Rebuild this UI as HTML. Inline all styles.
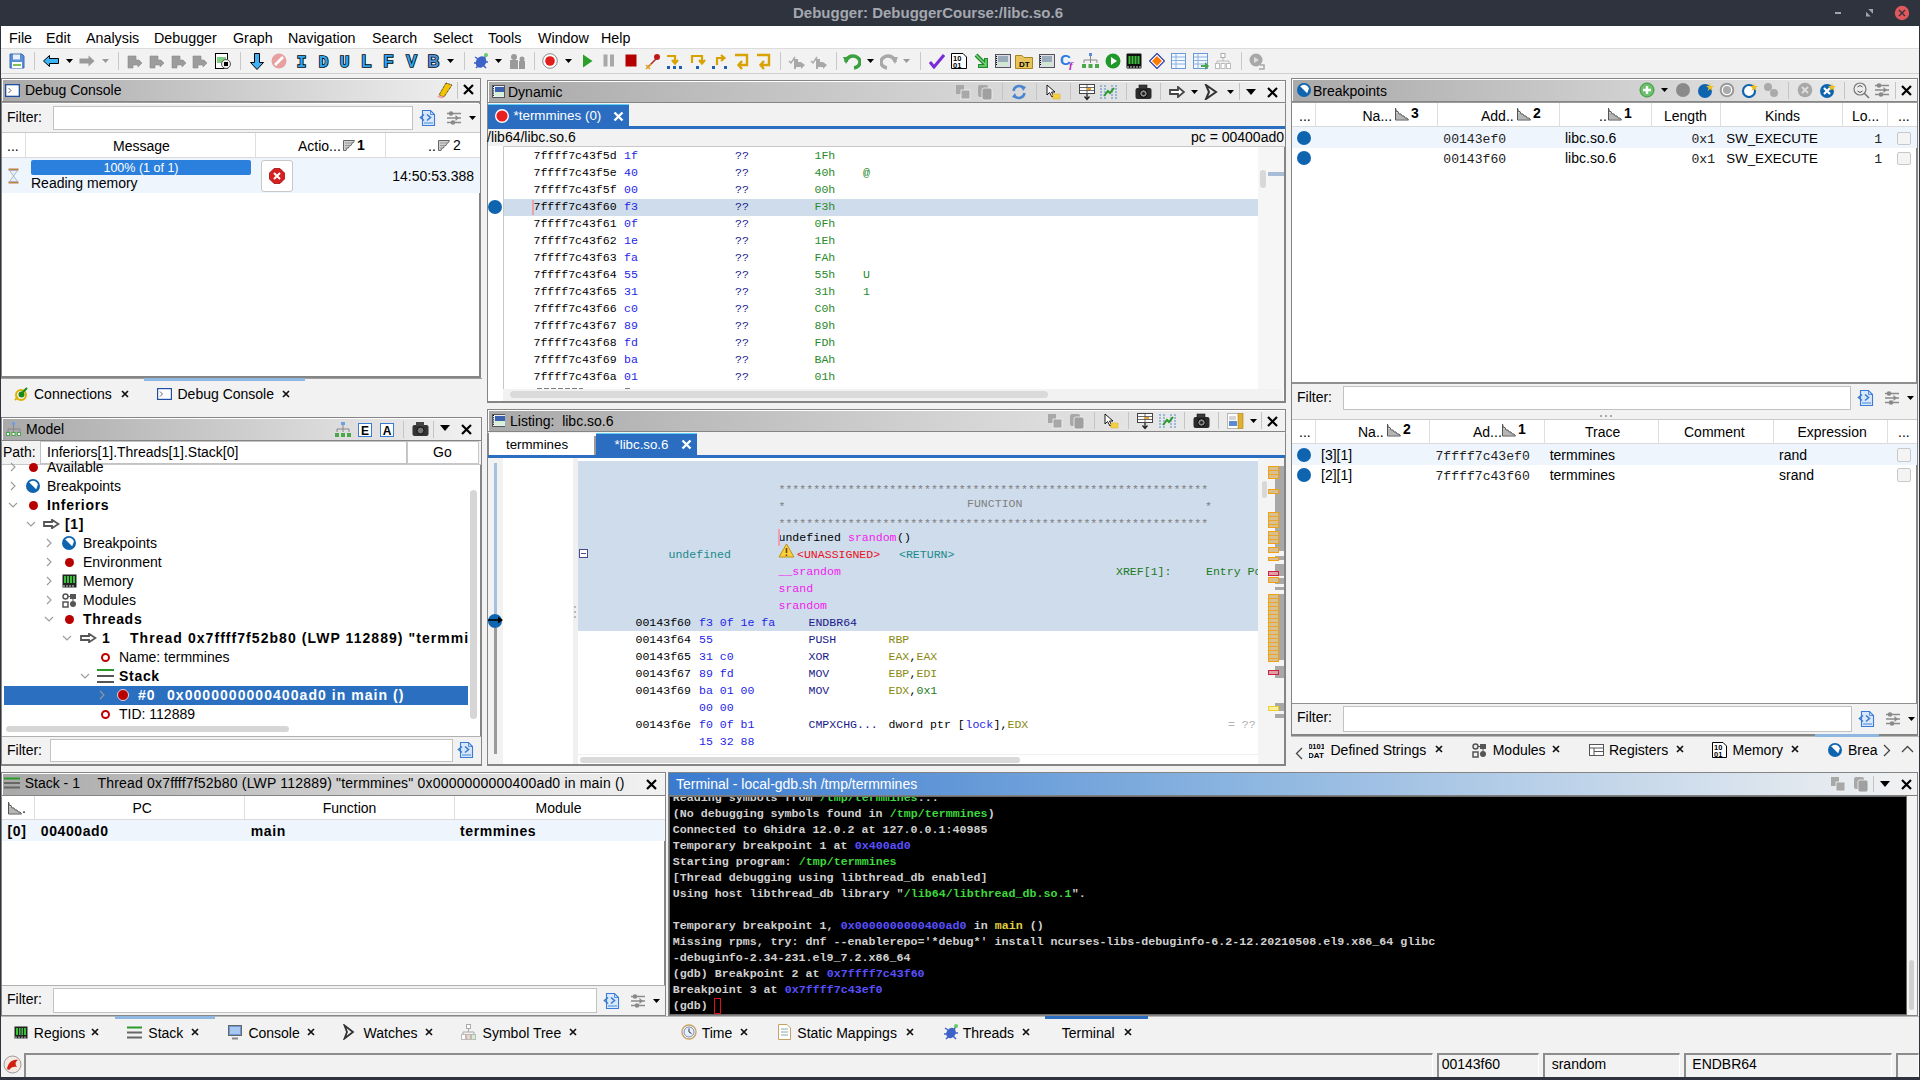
<!DOCTYPE html>
<html><head><meta charset="utf-8"><style>
*{box-sizing:border-box;margin:0;padding:0}
html,body{width:1920px;height:1080px;overflow:hidden;background:#f2f2f2;font-family:"Liberation Sans",sans-serif;font-size:13px;color:#000}
.a{position:absolute}
.t{position:absolute;white-space:pre}
</style></head><body>
<div class="a" style="left:0px;top:0px;width:1920px;height:26px;background:#2f333d"></div>
<div class="t" style="left:793px;top:3.30px;font-size:15px;line-height:19px;color:#a4a8b0;font-weight:bold;">Debugger: DebuggerCourse:/libc.so.6</div>
<div class="a" style="left:1835px;top:12px;width:6px;height:2px;background:#a0a4ac"></div>
<svg class="a" style="left:1866px;top:9px;" width="8" height="8" viewBox="0 0 8 8"><path d="M2.2 0 H7 V4.8 Z M0 2.7 V7.5 H4.8 Z" fill="#a0a4ac"/></svg>
<svg class="a" style="left:1894px;top:5px;" width="16" height="16" viewBox="0 0 16 16"><circle cx="8" cy="8" r="7.2" fill="#e0575c"/><path d="M5 5 L11 11 M11 5 L5 11" stroke="#2f333d" stroke-width="1.3"/></svg>
<div class="a" style="left:0px;top:26px;width:1px;height:1054px;background:#2f333d"></div>
<div class="a" style="left:1919px;top:26px;width:1px;height:1054px;background:#2f333d"></div>
<div class="a" style="left:0px;top:1077px;width:1920px;height:3px;background:#2f333d"></div>
<div class="a" style="left:1px;top:26px;width:1918px;height:23px;background:#fff"></div>
<div class="a" style="left:1px;top:48px;width:1918px;height:1px;background:#dcdcdc"></div>
<div class="t" style="left:9px;top:28.55px;font-size:14.3px;line-height:18px;">File</div>
<div class="t" style="left:46px;top:28.55px;font-size:14.3px;line-height:18px;">Edit</div>
<div class="t" style="left:86px;top:28.55px;font-size:14.3px;line-height:18px;">Analysis</div>
<div class="t" style="left:154px;top:28.55px;font-size:14.3px;line-height:18px;">Debugger</div>
<div class="t" style="left:233px;top:28.55px;font-size:14.3px;line-height:18px;">Graph</div>
<div class="t" style="left:288px;top:28.55px;font-size:14.3px;line-height:18px;">Navigation</div>
<div class="t" style="left:372px;top:28.55px;font-size:14.3px;line-height:18px;">Search</div>
<div class="t" style="left:433px;top:28.55px;font-size:14.3px;line-height:18px;">Select</div>
<div class="t" style="left:488px;top:28.55px;font-size:14.3px;line-height:18px;">Tools</div>
<div class="t" style="left:538px;top:28.55px;font-size:14.3px;line-height:18px;">Window</div>
<div class="t" style="left:601px;top:28.55px;font-size:14.3px;line-height:18px;">Help</div>
<div class="a" style="left:1px;top:49px;width:1918px;height:24px;background:#f2f2f2"></div>
<div class="a" style="left:1px;top:73px;width:1918px;height:1px;background:#d0d0d0"></div>
<svg class="a" style="left:9px;top:53px;" width="16" height="16" viewBox="0 0 16 16"><path d="M1 1 H13 L15 3 V15 H1 Z" fill="#5b8fd6" stroke="#3a6db8"/><rect x="4" y="1.5" width="7" height="5" fill="#e8f0fb"/><rect x="3" y="9" width="10" height="6" fill="#fff"/><rect x="4" y="11" width="8" height="2" fill="#7cc35a"/></svg>
<div class="a" style="left:34px;top:52px;width:1px;height:18px;background:#c8c8c8"></div>
<svg class="a" style="left:43px;top:55px;" width="16" height="12" viewBox="0 0 16 12"><path d="M0.5 6 L6.5 0.5 V3.5 H15.5 V8.5 H6.5 V11.5 Z" fill="#3fb1f5" stroke="#000" stroke-width="1"/></svg>
<svg class="a" style="left:66px;top:59px;" width="7" height="4" viewBox="0 0 7 4"><path d="M0 0 H7 L3.5 4 Z" fill="#000"/></svg>
<svg class="a" style="left:79px;top:55px;" width="16" height="12" viewBox="0 0 16 12"><path d="M15.5 6 L9.5 0.5 V3.5 H0.5 V8.5 H9.5 V11.5 Z" fill="#9a9a9a"/></svg>
<svg class="a" style="left:102px;top:59px;" width="7" height="4" viewBox="0 0 7 4"><path d="M0 0 H7 L3.5 4 Z" fill="#9a9a9a"/></svg>
<div class="a" style="left:118px;top:52px;width:1px;height:18px;background:#c8c8c8"></div>
<svg class="a" style="left:127px;top:53px;" width="16" height="16" viewBox="0 0 16 16"><path d="M1 3 H9 V7 H12 L15 10 L11 14 V12 H6 V15 H1 Z" fill="#9c9c9c" stroke="#8a8a8a" stroke-width="0.6"/></svg>
<svg class="a" style="left:149px;top:53px;" width="16" height="16" viewBox="0 0 16 16"><path d="M1 3 H9 V7 H12 L15 10 L11 14 V12 H6 V15 H1 Z" fill="#9c9c9c" stroke="#8a8a8a" stroke-width="0.6"/></svg>
<svg class="a" style="left:171px;top:53px;" width="16" height="16" viewBox="0 0 16 16"><path d="M1 3 H9 V7 H12 L15 10 L11 14 V12 H6 V15 H1 Z" fill="#9c9c9c" stroke="#8a8a8a" stroke-width="0.6"/></svg>
<svg class="a" style="left:192px;top:53px;" width="16" height="16" viewBox="0 0 16 16"><path d="M1 3 H9 V7 H12 L15 10 L11 14 V12 H6 V15 H1 Z" fill="#9c9c9c" stroke="#8a8a8a" stroke-width="0.6"/></svg>
<svg class="a" style="left:215px;top:53px;" width="16" height="16" viewBox="0 0 16 16"><rect x="0.5" y="0.5" width="12" height="15" fill="#fff" stroke="#000"/><rect x="2" y="4" width="9" height="6" fill="#7ed07e"/><circle cx="11" cy="11" r="4.5" fill="#eee" stroke="#555"/><rect x="9" y="9" width="4" height="4" fill="#000"/></svg>
<div class="a" style="left:240px;top:52px;width:1px;height:18px;background:#c8c8c8"></div>
<svg class="a" style="left:250px;top:53px;" width="14" height="17" viewBox="0 0 14 17"><path d="M4.5 0.5 H9.5 V9.5 H13.5 L7 16.5 L0.5 9.5 H4.5 Z" fill="#3fb1f5" stroke="#000"/></svg>
<svg class="a" style="left:271px;top:53px;" width="16" height="16" viewBox="0 0 16 16"><circle cx="8" cy="8" r="7.5" fill="#e6a0a0"/><path d="M4 12 L12 4" stroke="#fff" stroke-width="2.6"/></svg>
<svg class="a" style="left:293px;top:52px;" width="17" height="18" viewBox="0 0 17 18"><text x="8.5" y="15" text-anchor="middle" font-family="Liberation Mono" font-weight="bold" font-size="16" fill="#2fa5ee" stroke="#000" stroke-width="1.6" paint-order="stroke">I</text></svg>
<svg class="a" style="left:315px;top:52px;" width="17" height="18" viewBox="0 0 17 18"><text x="8.5" y="15" text-anchor="middle" font-family="Liberation Mono" font-weight="bold" font-size="16" fill="#2fa5ee" stroke="#000" stroke-width="1.6" paint-order="stroke">D</text></svg>
<svg class="a" style="left:336px;top:52px;" width="17" height="18" viewBox="0 0 17 18"><text x="8.5" y="15" text-anchor="middle" font-family="Liberation Mono" font-weight="bold" font-size="16" fill="#2fa5ee" stroke="#000" stroke-width="1.6" paint-order="stroke">U</text></svg>
<svg class="a" style="left:358px;top:52px;" width="17" height="18" viewBox="0 0 17 18"><text x="8.5" y="15" text-anchor="middle" font-family="Liberation Sans" font-weight="bold" font-size="16" fill="#2fa5ee" stroke="#000" stroke-width="1.6" paint-order="stroke">L</text></svg>
<svg class="a" style="left:380px;top:52px;" width="17" height="18" viewBox="0 0 17 18"><text x="8.5" y="15" text-anchor="middle" font-family="Liberation Sans" font-weight="bold" font-size="16" fill="#2fa5ee" stroke="#000" stroke-width="1.6" paint-order="stroke">F</text></svg>
<svg class="a" style="left:403px;top:52px;" width="17" height="18" viewBox="0 0 17 18"><text x="8.5" y="15" text-anchor="middle" font-family="Liberation Sans" font-weight="bold" font-size="16" fill="#2fa5ee" stroke="#000" stroke-width="1.6" paint-order="stroke">V</text></svg>
<svg class="a" style="left:425px;top:52px;" width="17" height="18" viewBox="0 0 17 18"><text x="8.5" y="15" text-anchor="middle" font-family="Liberation Sans" font-weight="bold" font-size="16" fill="#4f93db" stroke="#000" stroke-width="1.6" paint-order="stroke">B</text></svg>
<svg class="a" style="left:447px;top:59px;" width="7" height="4" viewBox="0 0 7 4"><path d="M0 0 H7 L3.5 4 Z" fill="#000"/></svg>
<div class="a" style="left:464px;top:52px;width:1px;height:18px;background:#c8c8c8"></div>
<svg class="a" style="left:473px;top:53px;" width="17" height="16" viewBox="0 0 17 16"><ellipse cx="8" cy="9" rx="5" ry="6" fill="#3d63c9" transform="rotate(35 8 9)"/><path d="M2 4 L5 6 M1 10 H4 M3 15 L6 12 M14 2 L11 5 M15 9 H12 M13 15 L10 12" stroke="#3d63c9" stroke-width="1.5"/><circle cx="13" cy="2" r="2" fill="#6c6"/></svg>
<svg class="a" style="left:495px;top:59px;" width="7" height="4" viewBox="0 0 7 4"><path d="M0 0 H7 L3.5 4 Z" fill="#000"/></svg>
<svg class="a" style="left:509px;top:53px;" width="17" height="17" viewBox="0 0 17 17"><circle cx="5" cy="4" r="3" fill="#9a9a9a"/><rect x="1" y="7" width="8" height="9" fill="#9a9a9a"/><rect x="10" y="8" width="6" height="8" fill="#9a9a9a"/><circle cx="13" cy="6" r="2.5" fill="#9a9a9a"/></svg>
<div class="a" style="left:534px;top:52px;width:1px;height:18px;background:#c8c8c8"></div>
<svg class="a" style="left:542px;top:53px;" width="16" height="16" viewBox="0 0 16 16"><circle cx="8" cy="8" r="7.3" fill="#fff" stroke="#8a8a8a"/><circle cx="8" cy="8" r="4.8" fill="#e21b1b"/></svg>
<svg class="a" style="left:565px;top:59px;" width="7" height="4" viewBox="0 0 7 4"><path d="M0 0 H7 L3.5 4 Z" fill="#000"/></svg>
<svg class="a" style="left:582px;top:54px;" width="11" height="14" viewBox="0 0 11 14"><path d="M1 0.5 L10.5 7 L1 13.5 Z" fill="#2aa02a"/></svg>
<svg class="a" style="left:603px;top:54px;" width="12" height="13" viewBox="0 0 12 13"><rect x="0.5" y="0.5" width="4" height="12" fill="#a8a8a8"/><rect x="7" y="0.5" width="4" height="12" fill="#a8a8a8"/></svg>
<svg class="a" style="left:625px;top:54px;" width="12" height="13" viewBox="0 0 12 13"><rect x="0.5" y="0.5" width="11" height="12" fill="#b40000"/></svg>
<svg class="a" style="left:645px;top:53px;" width="17" height="17" viewBox="0 0 17 17"><circle cx="12" cy="4" r="3" fill="#c01818"/><path d="M3 14 L12 5" stroke="#b02020" stroke-width="1.5"/><path d="M1 12 L5 16 M1 16 L6 11" stroke="#e0a020" stroke-width="1.6"/></svg>
<svg class="a" style="left:666px;top:53px;" width="17" height="17" viewBox="0 0 17 17"><path d="M1 3 H9 V10 M6 7 L9 10.5 L12 7" stroke="#d8a200" stroke-width="2.2" fill="none"/><rect x="1" y="13" width="3" height="3" fill="#1f5fb0"/><rect x="7" y="13" width="3" height="3" fill="#1f5fb0"/><rect x="13" y="13" width="3" height="3" fill="#1f5fb0"/></svg>
<svg class="a" style="left:689px;top:53px;" width="17" height="17" viewBox="0 0 17 17"><path d="M3 10 V3 H13 V10 M10 7 L13 10.5 L16 7" stroke="#d8a200" stroke-width="2.2" fill="none"/><rect x="7" y="13" width="3" height="3" fill="#1f5fb0"/></svg>
<svg class="a" style="left:711px;top:53px;" width="17" height="17" viewBox="0 0 17 17"><path d="M6 12 V5 H13 M10 2 L13.5 5 L10 8" stroke="#d8a200" stroke-width="2.2" fill="none"/><rect x="1" y="13" width="3" height="3" fill="#1f5fb0"/><rect x="13" y="13" width="3" height="3" fill="#1f5fb0"/></svg>
<svg class="a" style="left:733px;top:53px;" width="17" height="17" viewBox="0 0 17 17"><path d="M2 2 H14 V12 H6 M9 8 L5.5 12 L9 16" stroke="#d8a200" stroke-width="2.4" fill="none"/></svg>
<svg class="a" style="left:755px;top:53px;" width="17" height="17" viewBox="0 0 17 17"><path d="M2 2 H14 V12 H6 M9 8 L5.5 12 L9 16" stroke="#d8a200" stroke-width="2.4" fill="none"/></svg>
<div class="a" style="left:780px;top:52px;width:1px;height:18px;background:#c8c8c8"></div>
<svg class="a" style="left:788px;top:53px;" width="18" height="17" viewBox="0 0 18 17"><path d="M2 4 L5 1 M6 6 H10 V9 H13 L17 12 L13 16 V14 H8 V16 H6 Z" fill="#a8a8a8"/><path d="M1 8 L3 10 L7 4" stroke="#a8a8a8" stroke-width="1.4" fill="none"/></svg>
<svg class="a" style="left:810px;top:53px;" width="18" height="17" viewBox="0 0 18 17"><path d="M2 4 L5 1 M6 6 H10 V9 H13 L17 12 L13 16 V14 H8 V16 H6 Z" fill="#a8a8a8"/><path d="M1 8 L3 10 L7 4" stroke="#a8a8a8" stroke-width="1.4" fill="none"/></svg>
<div class="a" style="left:836px;top:52px;width:1px;height:18px;background:#c8c8c8"></div>
<svg class="a" style="left:843px;top:53px;" width="18" height="17" viewBox="0 0 18 17"><path d="M3 9 A7 6 0 1 1 11 15" stroke="#3aa040" stroke-width="3.5" fill="none"/><path d="M0 4 L7 4 L3 11 Z" fill="#3aa040"/></svg>
<svg class="a" style="left:867px;top:59px;" width="7" height="4" viewBox="0 0 7 4"><path d="M0 0 H7 L3.5 4 Z" fill="#000"/></svg>
<svg class="a" style="left:880px;top:53px;" width="18" height="17" viewBox="0 0 18 17"><path d="M15 9 A7 6 0 1 0 7 15" stroke="#a8a8a8" stroke-width="3.5" fill="none"/><path d="M18 4 L11 4 L15 11 Z" fill="#a8a8a8"/></svg>
<svg class="a" style="left:903px;top:59px;" width="7" height="4" viewBox="0 0 7 4"><path d="M0 0 H7 L3.5 4 Z" fill="#9a9a9a"/></svg>
<div class="a" style="left:920px;top:52px;width:1px;height:18px;background:#c8c8c8"></div>
<svg class="a" style="left:929px;top:53px;" width="16" height="16" viewBox="0 0 16 16"><path d="M1 9 L5 14 L15 2" stroke="#7a2ad6" stroke-width="3" fill="none"/></svg>
<svg class="a" style="left:951px;top:53px;" width="16" height="16" viewBox="0 0 16 16"><path d="M0.5 0.5 H12 L15.5 4 V15.5 H0.5 Z" fill="#fff" stroke="#000"/><text x="2" y="7.5" font-family="Liberation Sans" font-weight="bold" font-size="7.5">10</text><text x="2" y="14.5" font-family="Liberation Sans" font-weight="bold" font-size="7.5">01</text></svg>
<svg class="a" style="left:973px;top:53px;" width="16" height="16" viewBox="0 0 16 16"><path d="M3 2 L13 12 M13 5 V13 H5" stroke="#1e8a2a" stroke-width="4" fill="none"/><path d="M3 2 L13 12 M13 6 V13 H6" stroke="#7cd47c" stroke-width="1.5" fill="none"/></svg>
<svg class="a" style="left:995px;top:54px;" width="16" height="14" viewBox="0 0 16 14"><rect x="0.5" y="0.5" width="15" height="13" fill="#dde" stroke="#555"/><rect x="3" y="2" width="10" height="10" fill="#9ab"/><rect x="3" y="8" width="10" height="4" fill="#cfe8cf"/><path d="M1.5 2 V12" stroke="#000" stroke-dasharray="1 1"/></svg>
<svg class="a" style="left:1015px;top:53px;" width="18" height="16" viewBox="0 0 18 16"><path d="M0.5 2.5 H7 L9 4.5 H17.5 V15.5 H0.5 Z" fill="#e9c45a" stroke="#a98420"/><text x="4" y="13.5" font-family="Liberation Sans" font-weight="bold" font-size="8">DT</text></svg>
<svg class="a" style="left:1039px;top:54px;" width="16" height="14" viewBox="0 0 16 14"><rect x="0.5" y="0.5" width="15" height="13" fill="#dde" stroke="#555"/><rect x="3" y="2" width="10" height="10" fill="#9ab"/><rect x="3" y="8" width="10" height="4" fill="#cfe8cf"/><path d="M1.5 2 V12" stroke="#000" stroke-dasharray="1 1"/></svg>
<svg class="a" style="left:1060px;top:52px;" width="18" height="18" viewBox="0 0 18 18"><text x="0" y="13" font-family="Liberation Sans" font-weight="bold" font-size="15" fill="#2a7ae8">C</text><text x="9" y="17" font-family="Liberation Serif" font-style="italic" font-weight="bold" font-size="11" fill="#c020c0">f</text></svg>
<svg class="a" style="left:1082px;top:53px;" width="17" height="16" viewBox="0 0 17 16"><rect x="7" y="0" width="3" height="3" fill="#5a8ad8"/><path d="M8.5 3 V7 M2 10 V7 H15 V10 M8.5 7 V10" stroke="#888" fill="none"/><rect x="0" y="11" width="4" height="4" fill="#4aa84a"/><rect x="6.5" y="11" width="4" height="4" fill="#4aa84a"/><rect x="13" y="11" width="4" height="4" fill="#4aa84a"/></svg>
<svg class="a" style="left:1105px;top:53px;" width="16" height="16" viewBox="0 0 16 16"><circle cx="8" cy="8" r="7.5" fill="#1f9a2a"/><path d="M6 4 L12 8 L6 12 Z" fill="#fff"/></svg>
<svg class="a" style="left:1126px;top:53px;" width="16" height="16" viewBox="0 0 16 16"><rect x="0.5" y="0.5" width="15" height="15" fill="#111" rx="1"/><rect x="2.5" y="3" width="11" height="8" fill="#3cbf3c"/><path d="M5 3 V11 M8 3 V11 M11 3 V11" stroke="#111"/><path d="M2 13 V15 M5 13 V15 M8 13 V15 M11 13 V15 M14 13 V15" stroke="#ddd"/></svg>
<svg class="a" style="left:1149px;top:53px;" width="16" height="16" viewBox="0 0 16 16"><path d="M8 0.5 L15.5 8 L8 15.5 L0.5 8 Z" fill="#fff" stroke="#2a3aa8" stroke-width="1.2"/><path d="M8 3 L13 8 L8 13 L3 8 Z" fill="#ff7a00"/></svg>
<svg class="a" style="left:1171px;top:53px;" width="17" height="17" viewBox="0 0 17 17"><rect x="0.5" y="0.5" width="14" height="15" fill="#f4f8ff" stroke="#6a9ad8"/><path d="M1 4 H14 M1 7.5 H14 M1 11 H14 M5 1 V15" stroke="#8ab0e0"/></svg>
<svg class="a" style="left:1193px;top:53px;" width="17" height="17" viewBox="0 0 17 17"><rect x="0.5" y="0.5" width="14" height="15" fill="#f4f8ff" stroke="#6a9ad8"/><path d="M1 4 H14 M1 7.5 H14 M1 11 H14 M5 1 V15" stroke="#8ab0e0"/><path d="M8 12 H12 V9 L16 13 L12 17 V14 H8 Z" fill="#4aa84a"/></svg>
<svg class="a" style="left:1215px;top:53px;" width="16" height="16" viewBox="0 0 16 16"><rect x="6" y="0.5" width="4" height="4" fill="#fff" stroke="#aaa"/><path d="M8 5 V8 M2 10 V8 H14 V10" stroke="#bbb" fill="none"/><rect x="0.5" y="10.5" width="4" height="5" fill="#fff" stroke="#bbb"/><rect x="6" y="10.5" width="4" height="5" fill="#fff" stroke="#bbb"/><rect x="11.5" y="10.5" width="4" height="5" fill="#fff" stroke="#bbb"/></svg>
<div class="a" style="left:1241px;top:52px;width:1px;height:18px;background:#c8c8c8"></div>
<svg class="a" style="left:1249px;top:53px;" width="17" height="17" viewBox="0 0 17 17"><circle cx="7" cy="7" r="6.5" fill="#a8a8a8"/><path d="M5 4 L10 7 L5 10 Z" fill="#ddd"/><path d="M11 12 H15 V16 H10" stroke="#a8a8a8" stroke-width="1.5" fill="none"/></svg>
<div class="a" style="left:1px;top:78px;width:480px;height:300px;background:#fff;border:1px solid #858585;border-right:2px solid #858585;border-bottom:2px solid #858585"></div>
<div class="a" style="left:2px;top:79px;width:478px;height:23px;background:linear-gradient(to right,#a9a9a9,#f2f2f2);border-top:1px solid #fff;border-left:1px solid #fff"></div>
<div class="a" style="left:2px;top:101px;width:478px;height:1px;background:#858585"></div>
<div class="a" style="left:1px;top:102px;width:480px;height:1px;background:#9a9a9a"></div>
<svg class="a" style="left:5px;top:84px;" width="15" height="13" viewBox="0 0 15 13"><rect x="0.5" y="0.5" width="14" height="12" fill="#fff" stroke="#1f4fa0" stroke-width="1.6"/><path d="M3.5 4 L6 6.5 L3.5 9" stroke="#666" fill="none"/></svg>
<div class="t" style="left:25px;top:81.15px;font-size:14px;line-height:18px;">Debug Console</div>
<svg class="a" style="left:436px;top:82px;" width="17" height="17" viewBox="0 0 17 17"><path d="M10 1 L16 3 L8 15 L3 13 Z" fill="#f4c400" stroke="#000" stroke-width="0.8" stroke-dasharray="1 0.7"/><path d="M3 13 L8 15 L6 16.5 L1 15 Z" fill="#f0a0a8"/></svg>
<div class="a" style="left:457px;top:82px;width:1px;height:17px;background:#c4c4c4"></div>
<svg class="a" style="left:463.0px;top:84.0px;" width="11" height="11" viewBox="0 0 11 11"><path d="M1 1 L10 10 M10 1 L1 10" stroke="#000" stroke-width="2.2"/></svg>
<div class="a" style="left:1px;top:102px;width:480px;height:1px;background:#9a9a9a"></div>
<div class="a" style="left:2px;top:104px;width:478px;height:28px;background:#f2f2f2"></div>
<div class="t" style="left:7px;top:108.15px;font-size:14px;line-height:18px;">Filter:</div>
<div class="a" style="left:53px;top:106px;width:360px;height:24px;background:#fff;border:1px solid #c2c2c2"></div>
<svg class="a" style="left:419px;top:109.0px;" width="18" height="18" viewBox="0 0 18 18"><path d="M3.5 1.5 H11.5 L15.5 5.5 V16.5 H3.5 Z" fill="#d8e8fa" stroke="#3a7ad8" stroke-width="1.1"/><path d="M11.5 1.5 V5.5 H15.5" fill="none" stroke="#3a7ad8" stroke-width="0.8"/><path d="M5 5.5 L1.5 8.5 L5 11.5 M8 5.5 L11.5 8.5 L8 11.5" fill="none" stroke="#3a7ad0" stroke-width="1.6"/><path d="M5 14 H14" stroke="#5a9ae0" stroke-width="1.2"/></svg>
<svg class="a" style="left:446px;top:110.0px;" width="16" height="16" viewBox="0 0 16 16"><path d="M1 3.5 H15 M1 8 H15 M1 12.5 H15" stroke="#8a8a8a" stroke-width="1.6"/><circle cx="5" cy="3.5" r="2.3" fill="#8a8a8a"/><path d="M9.5 5 L13 8 L9.5 11 Z" fill="#8a8a8a"/><circle cx="7" cy="12.5" r="2.3" fill="#8a8a8a"/></svg>
<svg class="a" style="left:469px;top:116.0px;" width="7" height="4" viewBox="0 0 7 4"><path d="M0 0 H7 L3.5 4 Z" fill="#000"/></svg>
<div class="a" style="left:2px;top:132px;width:478px;height:1px;background:#c8c8c8"></div>
<div class="a" style="left:2px;top:133px;width:478px;height:25px;background:#fff;border-bottom:1px solid #dadada"></div>
<div class="a" style="left:25px;top:133px;width:1px;height:25px;background:#dedede"></div>
<div class="a" style="left:255px;top:133px;width:1px;height:25px;background:#dedede"></div>
<div class="a" style="left:385px;top:133px;width:1px;height:25px;background:#dedede"></div>
<div class="t" style="left:7px;top:137.15px;font-size:14px;line-height:18px;">...</div>
<div class="t" style="left:113px;top:137.15px;font-size:14px;line-height:18px;">Message</div>
<div class="t" style="left:298px;top:137.15px;font-size:14px;line-height:18px;">Actio...</div>
<svg class="a" style="left:342px;top:139px;" width="14" height="13" viewBox="0 0 14 13"><path d="M1.5 1.5 H12.5 L11 4 H10 L9 6.5 H7.5 L6.5 9 H5 L4 11.5 H1.5 Z" fill="#d0d0d0" stroke="#666" stroke-width="1"/><path d="M3 4 H10 M3 6.5 H8 M3 9 H6" stroke="#999"/></svg>
<div class="t" style="left:357px;top:136.15px;font-size:14px;line-height:18px;font-weight:bold;">1</div>
<div class="t" style="left:428px;top:137.15px;font-size:14px;line-height:18px;">..</div>
<svg class="a" style="left:437px;top:139px;" width="14" height="13" viewBox="0 0 14 13"><path d="M1.5 1.5 H12.5 L11 4 H10 L9 6.5 H7.5 L6.5 9 H5 L4 11.5 H1.5 Z" fill="#d0d0d0" stroke="#666" stroke-width="1"/><path d="M3 4 H10 M3 6.5 H8 M3 9 H6" stroke="#999"/></svg>
<div class="t" style="left:453px;top:136.15px;font-size:14px;line-height:18px;">2</div>
<div class="a" style="left:2px;top:158px;width:478px;height:35px;background:#eef5fd"></div>
<svg class="a" style="left:7px;top:168px;" width="13" height="16" viewBox="0 0 13 16"><path d="M1.5 1.5 H11.5 M1.5 14.5 H11.5" stroke="#c08040" stroke-width="2.2"/><path d="M2.5 2.5 L6.5 8 L2.5 13.5 H10.5 L6.5 8 L10.5 2.5 Z" fill="#e8f0fa" stroke="#9ab" stroke-width="0.8"/></svg>
<div class="a" style="left:31px;top:160px;width:220px;height:15px;background:#2a80dc;border-radius:2px"></div>
<div class="t" style="left:31.0px;width:220px;text-align:center;top:159.67px;font-size:12.5px;line-height:16px;color:#fff;">100% (1 of 1)</div>
<div class="t" style="left:31px;top:174.15px;font-size:14px;line-height:18px;">Reading memory</div>
<div class="a" style="left:261px;top:160px;width:32px;height:32px;background:#fff;border:1px solid #c8c8c8;border-radius:3px"></div>
<svg class="a" style="left:269px;top:168px;" width="16" height="16" viewBox="0 0 16 16"><path d="M5 0.5 H11 L15.5 5 V11 L11 15.5 H5 L0.5 11 V5 Z" fill="#d42020" stroke="#a01010" stroke-width="0.8"/><path d="M5 5 L11 11 M11 5 L5 11" stroke="#fff" stroke-width="2"/></svg>
<div class="t" style="left:354px;width:120px;text-align:right;top:167.15px;font-size:14px;line-height:18px;">14:50:53.388</div>
<div class="a" style="left:1px;top:378px;width:481px;height:1px;background:#a0a0a0"></div>
<div class="a" style="left:144px;top:378px;width:161px;height:3px;background:#8fb8e0"></div>
<svg class="a" style="left:14px;top:387px;" width="14" height="14" viewBox="0 0 14 14"><circle cx="7" cy="8" r="5" fill="none" stroke="#e0b000" stroke-width="2"/><circle cx="7.5" cy="7.5" r="3" fill="#1a8a1a"/><path d="M8 6 L13 1" stroke="#1a8a1a" stroke-width="2"/><path d="M1 13 L4 10" stroke="#e0b000" stroke-width="2"/></svg>
<div class="t" style="left:34px;top:385.15px;font-size:14px;line-height:18px;">Connections</div>
<svg class="a" style="left:120.5px;top:389.5px;" width="8" height="8" viewBox="0 0 8 8"><path d="M1 1 L7 7 M7 1 L1 7" stroke="#111" stroke-width="1.7"/></svg>
<svg class="a" style="left:157px;top:388px;" width="15" height="12" viewBox="0 0 15 12"><rect x="0.5" y="0.5" width="14" height="11" fill="#fff" stroke="#1f4fa0" stroke-width="1.4"/><path d="M3 3.5 L5.5 6 L3 8.5" stroke="#666" fill="none"/></svg>
<div class="t" style="left:177.5px;top:385.15px;font-size:14px;line-height:18px;">Debug Console</div>
<svg class="a" style="left:281.5px;top:389.5px;" width="8" height="8" viewBox="0 0 8 8"><path d="M1 1 L7 7 M7 1 L1 7" stroke="#111" stroke-width="1.7"/></svg>
<div class="a" style="left:1px;top:417px;width:481px;height:349px;background:#fff;border:1px solid #858585;border-right:2px solid #858585;border-bottom:2px solid #858585"></div>
<div class="a" style="left:2px;top:418px;width:479px;height:23px;background:linear-gradient(to right,#a9a9a9,#f2f2f2);border-top:1px solid #fff;border-left:1px solid #fff"></div>
<div class="a" style="left:2px;top:440px;width:479px;height:1px;background:#858585"></div>
<div class="a" style="left:1px;top:441px;width:481px;height:1px;background:#9a9a9a"></div>
<svg class="a" style="left:6px;top:422px;" width="16" height="16" viewBox="0 0 16 16"><rect x="6" y="0" width="3" height="3" fill="#6aa0e8"/><path d="M7.5 3 V7 M2 10 V7 H14 V10 M7.5 7 V10" stroke="#888" fill="none"/><rect x="0.5" y="10.5" width="3" height="3" fill="#fff" stroke="#4aa84a"/><rect x="6" y="10.5" width="3" height="3" fill="#fff" stroke="#4aa84a"/><rect x="11.5" y="10.5" width="3" height="3" fill="#fff" stroke="#4aa84a"/></svg>
<div class="t" style="left:26px;top:420.15px;font-size:14px;line-height:18px;">Model</div>
<svg class="a" style="left:335px;top:422px;" width="16" height="16" viewBox="0 0 16 16"><rect x="6" y="0" width="4" height="3" fill="#6aa0e8"/><path d="M8 3 V7 M2 10 V7 H14 V10 M8 7 V10" stroke="#888" fill="none"/><rect x="0" y="11" width="4" height="4" fill="#4aa84a"/><rect x="6" y="11" width="4" height="4" fill="#4aa84a"/><rect x="12" y="11" width="4" height="4" fill="#4aa84a"/></svg>
<svg class="a" style="left:358px;top:423px;" width="14" height="14" viewBox="0 0 14 14"><rect x="0.5" y="0.5" width="13" height="13" fill="#fff" stroke="#3a7ad0"/><text x="7" y="11.5" text-anchor="middle" font-family="Liberation Sans" font-weight="bold" font-size="12">E</text></svg>
<svg class="a" style="left:380px;top:423px;" width="14" height="14" viewBox="0 0 14 14"><rect x="0.5" y="0.5" width="13" height="13" fill="#fff" stroke="#3a7ad0"/><text x="7" y="11.5" text-anchor="middle" font-family="Liberation Sans" font-weight="bold" font-size="12">A</text></svg>
<div class="a" style="left:403px;top:421px;width:1px;height:17px;background:#c4c4c4"></div>
<svg class="a" style="left:412px;top:421px;" width="17" height="16" viewBox="0 0 17 16"><rect x="0.5" y="4" width="16" height="11" rx="2" fill="#333"/><rect x="4" y="1" width="8" height="4" fill="#444"/><circle cx="8.5" cy="9.5" r="3.5" fill="#777" stroke="#111"/></svg>
<div class="a" style="left:433px;top:421px;width:1px;height:17px;background:#c4c4c4"></div>
<svg class="a" style="left:439.5px;top:425px;" width="10" height="6" viewBox="0 0 10 6"><path d="M0 0 H10 L5.0 6 Z" fill="#000"/></svg>
<svg class="a" style="left:461.0px;top:423.5px;" width="11" height="11" viewBox="0 0 11 11"><path d="M1 1 L10 10 M10 1 L1 10" stroke="#000" stroke-width="2.2"/></svg>
<div class="a" style="left:2px;top:441px;width:479px;height:23px;background:#f2f2f2"></div>
<div class="t" style="left:3px;top:443.15px;font-size:14px;line-height:18px;">Path:</div>
<div class="a" style="left:40px;top:441px;width:367px;height:23px;background:#fff;border:1px solid #c2c2c2"></div>
<div class="t" style="left:47px;top:443.15px;font-size:14px;line-height:18px;">Inferiors[1].Threads[1].Stack[0]</div>
<div class="a" style="left:407px;top:441px;width:72px;height:23px;background:#fff;border:1px solid #c8c8c8"></div>
<div class="t" style="left:433px;top:443.15px;font-size:14px;line-height:18px;">Go</div>
<div class="a" style="left:2px;top:464px;width:479px;height:1px;background:#c8c8c8"></div>
<div class="a" style="left:4px;top:686px;width:464px;height:19px;background:#2b6fc0"></div>
<svg class="a" style="left:10px;top:462px;" width="6" height="10" viewBox="0 0 6 10"><path d="M1 1 L5 5 L1 9" stroke="#9a9a9a" stroke-width="1.1" fill="none"/></svg>
<svg class="a" style="left:27.5px;top:461.5px;" width="11.0" height="11.0" viewBox="0 0 11.0 11.0"><circle cx="5.5" cy="5.5" r="4.5" fill="#b80000"/></svg>
<div class="t" style="left:47px;top:458.15px;font-size:14px;line-height:18px;">Available</div>
<svg class="a" style="left:10px;top:481px;" width="6" height="10" viewBox="0 0 6 10"><path d="M1 1 L5 5 L1 9" stroke="#9a9a9a" stroke-width="1.1" fill="none"/></svg>
<svg class="a" style="left:25px;top:478px;" width="16" height="16" viewBox="0 0 16 16"><circle cx="8" cy="8" r="7" fill="#0f64b0"/><path d="M4.1499999999999995 4.1499999999999995 L11.15 11.15 L12.899999999999999 6.6 A4.8999999999999995 4.8999999999999995 0 0 0 6.6 3.1000000000000005 Z" fill="#fff"/></svg>
<div class="t" style="left:47px;top:477.15px;font-size:14px;line-height:18px;">Breakpoints</div>
<svg class="a" style="left:8px;top:502px;" width="10" height="6" viewBox="0 0 10 6"><path d="M1 1 L5 5 L9 1" stroke="#9a9a9a" stroke-width="1.1" fill="none"/></svg>
<svg class="a" style="left:27.5px;top:499.5px;" width="11.0" height="11.0" viewBox="0 0 11.0 11.0"><circle cx="5.5" cy="5.5" r="4.5" fill="#b80000"/></svg>
<div class="t" style="left:47px;top:496.15px;font-size:14px;line-height:18px;font-weight:bold;letter-spacing:0.7px;">Inferiors</div>
<svg class="a" style="left:26px;top:521px;" width="10" height="6" viewBox="0 0 10 6"><path d="M1 1 L5 5 L9 1" stroke="#9a9a9a" stroke-width="1.1" fill="none"/></svg>
<svg class="a" style="left:43px;top:519px;" width="17" height="10" viewBox="0 0 17 10"><path d="M1 3 H9 V0.8 L15.5 5 L9 9.2 V7 H1 Z" fill="none" stroke="#555" stroke-width="1.8"/></svg>
<div class="t" style="left:65px;top:515.15px;font-size:14px;line-height:18px;font-weight:bold;letter-spacing:0.7px;">[1]</div>
<svg class="a" style="left:46px;top:538px;" width="6" height="10" viewBox="0 0 6 10"><path d="M1 1 L5 5 L1 9" stroke="#9a9a9a" stroke-width="1.1" fill="none"/></svg>
<svg class="a" style="left:61px;top:535px;" width="16" height="16" viewBox="0 0 16 16"><circle cx="8" cy="8" r="7" fill="#0f64b0"/><path d="M4.1499999999999995 4.1499999999999995 L11.15 11.15 L12.899999999999999 6.6 A4.8999999999999995 4.8999999999999995 0 0 0 6.6 3.1000000000000005 Z" fill="#fff"/></svg>
<div class="t" style="left:83px;top:534.15px;font-size:14px;line-height:18px;">Breakpoints</div>
<svg class="a" style="left:46px;top:557px;" width="6" height="10" viewBox="0 0 6 10"><path d="M1 1 L5 5 L1 9" stroke="#9a9a9a" stroke-width="1.1" fill="none"/></svg>
<svg class="a" style="left:63.5px;top:556.5px;" width="11.0" height="11.0" viewBox="0 0 11.0 11.0"><circle cx="5.5" cy="5.5" r="4.5" fill="#b80000"/></svg>
<div class="t" style="left:83px;top:553.15px;font-size:14px;line-height:18px;">Environment</div>
<svg class="a" style="left:46px;top:576px;" width="6" height="10" viewBox="0 0 6 10"><path d="M1 1 L5 5 L1 9" stroke="#9a9a9a" stroke-width="1.1" fill="none"/></svg>
<svg class="a" style="left:62px;top:574px;" width="15" height="14" viewBox="0 0 15 14"><rect x="0.5" y="0.5" width="14" height="13" fill="#222"/><rect x="2" y="2" width="11" height="7" fill="#3cbf3c"/><path d="M4.5 2 V9 M7.5 2 V9 M10.5 2 V9" stroke="#222"/><path d="M2 11 V13 M5 11 V13 M8 11 V13 M11 11 V13" stroke="#ddd"/></svg>
<div class="t" style="left:83px;top:572.15px;font-size:14px;line-height:18px;">Memory</div>
<svg class="a" style="left:46px;top:595px;" width="6" height="10" viewBox="0 0 6 10"><path d="M1 1 L5 5 L1 9" stroke="#9a9a9a" stroke-width="1.1" fill="none"/></svg>
<svg class="a" style="left:62px;top:593px;" width="15" height="15" viewBox="0 0 15 15"><circle cx="3.5" cy="3.5" r="2.5" fill="none" stroke="#555" stroke-width="1.5"/><rect x="8" y="1" width="6" height="5" fill="#555"/><rect x="1" y="9" width="5" height="5" fill="none" stroke="#555" stroke-width="1.5"/><circle cx="11" cy="11" r="3" fill="#555"/><path d="M6 3.5 H8 M11 6 V8" stroke="#555"/></svg>
<div class="t" style="left:83px;top:591.15px;font-size:14px;line-height:18px;">Modules</div>
<svg class="a" style="left:44px;top:616px;" width="10" height="6" viewBox="0 0 10 6"><path d="M1 1 L5 5 L9 1" stroke="#9a9a9a" stroke-width="1.1" fill="none"/></svg>
<svg class="a" style="left:63.5px;top:613.5px;" width="11.0" height="11.0" viewBox="0 0 11.0 11.0"><circle cx="5.5" cy="5.5" r="4.5" fill="#b80000"/></svg>
<div class="t" style="left:83px;top:610.15px;font-size:14px;line-height:18px;font-weight:bold;letter-spacing:0.7px;">Threads</div>
<svg class="a" style="left:62px;top:635px;" width="10" height="6" viewBox="0 0 10 6"><path d="M1 1 L5 5 L9 1" stroke="#9a9a9a" stroke-width="1.1" fill="none"/></svg>
<svg class="a" style="left:80px;top:633px;" width="17" height="10" viewBox="0 0 17 10"><path d="M1 3 H9 V0.8 L15.5 5 L9 9.2 V7 H1 Z" fill="none" stroke="#555" stroke-width="1.8"/></svg>
<div class="t" style="left:102px;top:629.15px;font-size:14px;line-height:18px;font-weight:bold;letter-spacing:0.7px;">1</div>
<svg class="a" style="left:99.5px;top:651.5px;" width="11.0" height="11.0" viewBox="0 0 11.0 11.0"><circle cx="5.5" cy="5.5" r="3.5" fill="#fff" stroke="#c00000" stroke-width="2"/></svg>
<div class="t" style="left:119px;top:648.15px;font-size:14px;line-height:18px;">Name: termmines</div>
<svg class="a" style="left:80px;top:673px;" width="10" height="6" viewBox="0 0 10 6"><path d="M1 1 L5 5 L9 1" stroke="#9a9a9a" stroke-width="1.1" fill="none"/></svg>
<svg class="a" style="left:96px;top:668px;" width="19" height="17" viewBox="0 0 19 17"><path d="M1 2 H18" stroke="#2a9a2a" stroke-width="2"/><path d="M1 8 H18 M1 14 H18" stroke="#555" stroke-width="2"/></svg>
<div class="t" style="left:119px;top:667.15px;font-size:14px;line-height:18px;font-weight:bold;letter-spacing:0.7px;">Stack</div>
<svg class="a" style="left:99.5px;top:708.5px;" width="11.0" height="11.0" viewBox="0 0 11.0 11.0"><circle cx="5.5" cy="5.5" r="3.5" fill="#fff" stroke="#c00000" stroke-width="2"/></svg>
<div class="t" style="left:119px;top:705.15px;font-size:14px;line-height:18px;">TID: 112889</div>
<div class="a" style="left:0;top:630px;width:468px;height:19px;overflow:hidden">
<div class="t" style="left:130px;top:-0.85px;font-size:14px;line-height:18px;font-weight:bold;letter-spacing:1.05px;">Thread 0x7ffff7f52b80 (LWP 112889) &quot;termmines&quot;</div>
</div>
<svg class="a" style="left:99px;top:690px;" width="6" height="10" viewBox="0 0 6 10"><path d="M1 1 L5 5 L1 9" stroke="#9a9a9a" stroke-width="1.1" fill="none"/></svg>
<svg class="a" style="left:117px;top:689px;" width="12" height="12" viewBox="0 0 12 12"><circle cx="6" cy="6" r="5.5" fill="#b80000" stroke="#fff" stroke-width="0.8"/></svg>
<div class="t" style="left:138px;top:686.15px;font-size:14px;line-height:18px;color:#fff;font-weight:bold;letter-spacing:1px;">#0</div>
<div class="t" style="left:167px;top:686.15px;font-size:14px;line-height:18px;color:#fff;font-weight:bold;letter-spacing:1.05px;">0x0000000000400ad0 in main ()</div>
<div class="a" style="left:470px;top:490px;width:7px;height:229px;background:#d6d6d6;border-radius:4px"></div>
<div class="a" style="left:6px;top:726px;width:283px;height:6px;background:#d6d6d6;border-radius:3px"></div>
<div class="a" style="left:2px;top:736px;width:479px;height:1px;background:#b0b0b0"></div>
<div class="a" style="left:2px;top:737px;width:479px;height:27px;background:#f2f2f2"></div>
<div class="t" style="left:7px;top:741.15px;font-size:14px;line-height:18px;">Filter:</div>
<div class="a" style="left:50px;top:739px;width:403px;height:23px;background:#fff;border:1px solid #c2c2c2"></div>
<svg class="a" style="left:457px;top:741px;" width="18" height="18" viewBox="0 0 18 18"><path d="M3.5 1.5 H11.5 L15.5 5.5 V16.5 H3.5 Z" fill="#d8e8fa" stroke="#3a7ad8" stroke-width="1.1"/><path d="M11.5 1.5 V5.5 H15.5" fill="none" stroke="#3a7ad8" stroke-width="0.8"/><path d="M5 5.5 L1.5 8.5 L5 11.5 M8 5.5 L11.5 8.5 L8 11.5" fill="none" stroke="#3a7ad0" stroke-width="1.6"/><path d="M5 14 H14" stroke="#5a9ae0" stroke-width="1.2"/></svg>
<div class="a" style="left:487px;top:80px;width:799px;height:323px;background:#fff;border:1px solid #858585;border-right:2px solid #858585;border-bottom:2px solid #858585"></div>
<div class="a" style="left:488px;top:81px;width:797px;height:22px;background:linear-gradient(to right,#a9a9a9,#f2f2f2);border-top:1px solid #fff;border-left:1px solid #fff"></div>
<div class="a" style="left:488px;top:102px;width:797px;height:1px;background:#858585"></div>
<div class="a" style="left:487px;top:103px;width:799px;height:1px;background:#9a9a9a"></div>
<svg class="a" style="left:492px;top:85px;" width="13" height="13" viewBox="0 0 13 13"><rect x="0.5" y="0.5" width="12" height="12" fill="#e8eef8" stroke="#555"/><rect x="3" y="2" width="9" height="5" fill="#3a60b0"/><rect x="3" y="7" width="9" height="4" fill="#d8f0d8"/><path d="M1.5 1 V12" stroke="#000" stroke-dasharray="1 1.2"/></svg>
<div class="t" style="left:508px;top:83.15px;font-size:14px;line-height:18px;">Dynamic</div>
<svg class="a" style="left:955px;top:84px;" width="16" height="16" viewBox="0 0 16 16"><rect x="1" y="1" width="8" height="9" fill="#a8a8a8"/><rect x="6" y="6" width="9" height="9" fill="#a8a8a8" stroke="#f2f2f2" stroke-width="0.8"/></svg>
<svg class="a" style="left:977px;top:84px;" width="16" height="17" viewBox="0 0 16 17"><rect x="1" y="1" width="10" height="12" rx="2" fill="#a8a8a8"/><rect x="5" y="4" width="10" height="12" rx="2" fill="#a0a0a0" stroke="#f2f2f2" stroke-width="0.8"/></svg>
<div class="a" style="left:1002px;top:83px;width:1px;height:17px;background:#c4c4c4"></div>
<svg class="a" style="left:1011px;top:84px;" width="16" height="16" viewBox="0 0 16 16"><path d="M2.5 7 A5.5 5.5 0 0 1 12.5 4.5" stroke="#4a86d0" stroke-width="2.4" fill="none"/><path d="M13.5 9 A5.5 5.5 0 0 1 3.5 11.5" stroke="#4a86d0" stroke-width="2.4" fill="none"/><path d="M10 1 L15 3 L12 7 Z M6 15 L1 13 L4 9 Z" fill="#4a86d0"/></svg>
<div class="a" style="left:1036px;top:83px;width:1px;height:17px;background:#c4c4c4"></div>
<svg class="a" style="left:1046px;top:84px;" width="15" height="16" viewBox="0 0 15 16"><path d="M1 1 V11 L3.5 8.5 L6 13 L7.5 12 L5.5 8 H9 Z" fill="#fff" stroke="#000" stroke-width="0.9"/><rect x="7" y="10" width="7" height="5" fill="#f4d040" stroke="#e0b020" stroke-width="0.5"/></svg>
<div class="a" style="left:1070px;top:83px;width:1px;height:17px;background:#c4c4c4"></div>
<svg class="a" style="left:1079px;top:84px;" width="17" height="17" viewBox="0 0 17 17"><rect x="0.5" y="0.5" width="15" height="9" fill="#fff" stroke="#444"/><path d="M1 3.5 H15 M1 6.5 H15 M8 1 V9" stroke="#444" stroke-width="0.8"/><rect x="8" y="4" width="4" height="2" fill="#f0a020"/><path d="M8 10 V15 M5.5 12.5 L8 15.5 L10.5 12.5" stroke="#222" stroke-width="1.3" fill="none"/></svg>
<svg class="a" style="left:1100px;top:84px;" width="17" height="17" viewBox="0 0 17 17"><path d="M1 1 V15 M5 1 V15 M12 1 V15 M16 1 V15" stroke="#4a8ad0" stroke-dasharray="2 1"/><path d="M4 12 L8 7 L10 9 L14 4" stroke="#2a9a2a" stroke-width="2" fill="none"/></svg>
<div class="a" style="left:1126px;top:83px;width:1px;height:17px;background:#c4c4c4"></div>
<svg class="a" style="left:1135px;top:84px;" width="17" height="16" viewBox="0 0 17 16"><rect x="0.5" y="4" width="16" height="11" rx="2" fill="#2a2a2a"/><rect x="4" y="1" width="8" height="4" fill="#3a3a3a" stroke="#111" stroke-width="0.6"/><circle cx="8.5" cy="9.5" r="3.8" fill="#888" stroke="#000"/><circle cx="8.5" cy="9.5" r="1.6" fill="#222"/></svg>
<div class="a" style="left:1160px;top:83px;width:1px;height:17px;background:#c4c4c4"></div>
<svg class="a" style="left:1169px;top:86px;" width="16" height="12" viewBox="0 0 16 12"><path d="M1 4 H9 V1 L15 6 L9 11 V8 H1 Z" fill="#fff" stroke="#444" stroke-width="1.8"/></svg>
<svg class="a" style="left:1191px;top:90px;" width="7" height="4" viewBox="0 0 7 4"><path d="M0 0 H7 L3.5 4 Z" fill="#000"/></svg>
<svg class="a" style="left:1204px;top:84px;" width="14" height="16" viewBox="0 0 14 16"><path d="M2 1 L12 8 L2 15 L5 8 Z" fill="none" stroke="#333" stroke-width="2"/></svg>
<svg class="a" style="left:1227px;top:90px;" width="7" height="4" viewBox="0 0 7 4"><path d="M0 0 H7 L3.5 4 Z" fill="#000"/></svg>
<div class="a" style="left:1239px;top:83px;width:1px;height:17px;background:#c4c4c4"></div>
<svg class="a" style="left:1245.5px;top:89px;" width="10" height="6" viewBox="0 0 10 6"><path d="M0 0 H10 L5.0 6 Z" fill="#000"/></svg>
<svg class="a" style="left:1267.0px;top:86.5px;" width="11" height="11" viewBox="0 0 11 11"><path d="M1 1 L10 10 M10 1 L1 10" stroke="#000" stroke-width="2.2"/></svg>
<div class="a" style="left:488px;top:103px;width:797px;height:26px;background:#f2f2f2"></div>
<div class="a" style="left:488px;top:104px;width:141px;height:23px;background:#2b6ec1"></div>
<div class="a" style="left:488px;top:104px;width:141px;height:1px;background:#5fd0f5"></div>
<div class="a" style="left:488px;top:126px;width:797px;height:3px;background:#2b6ec1"></div>
<svg class="a" style="left:495px;top:109px;" width="14" height="14" viewBox="0 0 14 14"><circle cx="7" cy="7" r="6.3" fill="#e82020" stroke="#fff" stroke-width="1.4"/></svg>
<div class="t" style="left:513.5px;top:106.86px;font-size:13.4px;line-height:17px;color:#fff;">*termmines (0)</div>
<svg class="a" style="left:613px;top:111px;" width="11" height="11" viewBox="0 0 11 11"><path d="M1.5 1.5 L9.5 9.5 M9.5 1.5 L1.5 9.5" stroke="#fff" stroke-width="2.4"/></svg>
<div class="a" style="left:488px;top:129px;width:797px;height:17px;background:#f2f2f2"></div>
<div class="t" style="left:487px;top:128.15px;font-size:14px;line-height:18px;">/lib64/libc.so.6</div>
<div class="t" style="left:1134px;width:150px;text-align:right;top:128.15px;font-size:14px;line-height:18px;">pc = 00400ad0</div>
<div class="a" style="left:503px;top:146px;width:782px;height:1px;background:#c8c8c8"></div>
<div class="a" style="left:503px;top:146px;width:1px;height:243px;background:#c8c8c8"></div>
<div class="a" style="left:504px;top:199px;width:754px;height:17px;background:#cfdcec"></div>
<div class="t" style="left:533.5px;top:149.42px;font-size:11.55px;line-height:14px;color:#000;font-family:'Liberation Mono',monospace;">7ffff7c43f5d</div>
<div class="t" style="left:624px;top:149.42px;font-size:11.55px;line-height:14px;color:#1e1ee8;font-family:'Liberation Mono',monospace;">1f</div>
<div class="t" style="left:735px;top:149.42px;font-size:11.55px;line-height:14px;color:#1a1a8a;font-family:'Liberation Mono',monospace;">??</div>
<div class="t" style="left:814.5px;top:149.42px;font-size:11.55px;line-height:14px;color:#2a8a2a;font-family:'Liberation Mono',monospace;">1Fh</div>
<div class="t" style="left:533.5px;top:166.37px;font-size:11.55px;line-height:14px;color:#000;font-family:'Liberation Mono',monospace;">7ffff7c43f5e</div>
<div class="t" style="left:624px;top:166.37px;font-size:11.55px;line-height:14px;color:#1e1ee8;font-family:'Liberation Mono',monospace;">40</div>
<div class="t" style="left:735px;top:166.37px;font-size:11.55px;line-height:14px;color:#1a1a8a;font-family:'Liberation Mono',monospace;">??</div>
<div class="t" style="left:814.5px;top:166.37px;font-size:11.55px;line-height:14px;color:#2a8a2a;font-family:'Liberation Mono',monospace;">40h</div>
<div class="t" style="left:863px;top:166.37px;font-size:11.55px;line-height:14px;color:#2a8a2a;font-family:'Liberation Mono',monospace;">@</div>
<div class="t" style="left:533.5px;top:183.32px;font-size:11.55px;line-height:14px;color:#000;font-family:'Liberation Mono',monospace;">7ffff7c43f5f</div>
<div class="t" style="left:624px;top:183.32px;font-size:11.55px;line-height:14px;color:#1e1ee8;font-family:'Liberation Mono',monospace;">00</div>
<div class="t" style="left:735px;top:183.32px;font-size:11.55px;line-height:14px;color:#1a1a8a;font-family:'Liberation Mono',monospace;">??</div>
<div class="t" style="left:814.5px;top:183.32px;font-size:11.55px;line-height:14px;color:#2a8a2a;font-family:'Liberation Mono',monospace;">00h</div>
<div class="t" style="left:533.5px;top:200.27px;font-size:11.55px;line-height:14px;color:#000;font-family:'Liberation Mono',monospace;">7ffff7c43f60</div>
<div class="t" style="left:624px;top:200.27px;font-size:11.55px;line-height:14px;color:#1e1ee8;font-family:'Liberation Mono',monospace;">f3</div>
<div class="t" style="left:735px;top:200.27px;font-size:11.55px;line-height:14px;color:#1a1a8a;font-family:'Liberation Mono',monospace;">??</div>
<div class="t" style="left:814.5px;top:200.27px;font-size:11.55px;line-height:14px;color:#2a8a2a;font-family:'Liberation Mono',monospace;">F3h</div>
<div class="t" style="left:533.5px;top:217.22px;font-size:11.55px;line-height:14px;color:#000;font-family:'Liberation Mono',monospace;">7ffff7c43f61</div>
<div class="t" style="left:624px;top:217.22px;font-size:11.55px;line-height:14px;color:#1e1ee8;font-family:'Liberation Mono',monospace;">0f</div>
<div class="t" style="left:735px;top:217.22px;font-size:11.55px;line-height:14px;color:#1a1a8a;font-family:'Liberation Mono',monospace;">??</div>
<div class="t" style="left:814.5px;top:217.22px;font-size:11.55px;line-height:14px;color:#2a8a2a;font-family:'Liberation Mono',monospace;">0Fh</div>
<div class="t" style="left:533.5px;top:234.17px;font-size:11.55px;line-height:14px;color:#000;font-family:'Liberation Mono',monospace;">7ffff7c43f62</div>
<div class="t" style="left:624px;top:234.17px;font-size:11.55px;line-height:14px;color:#1e1ee8;font-family:'Liberation Mono',monospace;">1e</div>
<div class="t" style="left:735px;top:234.17px;font-size:11.55px;line-height:14px;color:#1a1a8a;font-family:'Liberation Mono',monospace;">??</div>
<div class="t" style="left:814.5px;top:234.17px;font-size:11.55px;line-height:14px;color:#2a8a2a;font-family:'Liberation Mono',monospace;">1Eh</div>
<div class="t" style="left:533.5px;top:251.12px;font-size:11.55px;line-height:14px;color:#000;font-family:'Liberation Mono',monospace;">7ffff7c43f63</div>
<div class="t" style="left:624px;top:251.12px;font-size:11.55px;line-height:14px;color:#1e1ee8;font-family:'Liberation Mono',monospace;">fa</div>
<div class="t" style="left:735px;top:251.12px;font-size:11.55px;line-height:14px;color:#1a1a8a;font-family:'Liberation Mono',monospace;">??</div>
<div class="t" style="left:814.5px;top:251.12px;font-size:11.55px;line-height:14px;color:#2a8a2a;font-family:'Liberation Mono',monospace;">FAh</div>
<div class="t" style="left:533.5px;top:268.07px;font-size:11.55px;line-height:14px;color:#000;font-family:'Liberation Mono',monospace;">7ffff7c43f64</div>
<div class="t" style="left:624px;top:268.07px;font-size:11.55px;line-height:14px;color:#1e1ee8;font-family:'Liberation Mono',monospace;">55</div>
<div class="t" style="left:735px;top:268.07px;font-size:11.55px;line-height:14px;color:#1a1a8a;font-family:'Liberation Mono',monospace;">??</div>
<div class="t" style="left:814.5px;top:268.07px;font-size:11.55px;line-height:14px;color:#2a8a2a;font-family:'Liberation Mono',monospace;">55h</div>
<div class="t" style="left:863px;top:268.07px;font-size:11.55px;line-height:14px;color:#2a8a2a;font-family:'Liberation Mono',monospace;">U</div>
<div class="t" style="left:533.5px;top:285.02px;font-size:11.55px;line-height:14px;color:#000;font-family:'Liberation Mono',monospace;">7ffff7c43f65</div>
<div class="t" style="left:624px;top:285.02px;font-size:11.55px;line-height:14px;color:#1e1ee8;font-family:'Liberation Mono',monospace;">31</div>
<div class="t" style="left:735px;top:285.02px;font-size:11.55px;line-height:14px;color:#1a1a8a;font-family:'Liberation Mono',monospace;">??</div>
<div class="t" style="left:814.5px;top:285.02px;font-size:11.55px;line-height:14px;color:#2a8a2a;font-family:'Liberation Mono',monospace;">31h</div>
<div class="t" style="left:863px;top:285.02px;font-size:11.55px;line-height:14px;color:#2a8a2a;font-family:'Liberation Mono',monospace;">1</div>
<div class="t" style="left:533.5px;top:301.97px;font-size:11.55px;line-height:14px;color:#000;font-family:'Liberation Mono',monospace;">7ffff7c43f66</div>
<div class="t" style="left:624px;top:301.97px;font-size:11.55px;line-height:14px;color:#1e1ee8;font-family:'Liberation Mono',monospace;">c0</div>
<div class="t" style="left:735px;top:301.97px;font-size:11.55px;line-height:14px;color:#1a1a8a;font-family:'Liberation Mono',monospace;">??</div>
<div class="t" style="left:814.5px;top:301.97px;font-size:11.55px;line-height:14px;color:#2a8a2a;font-family:'Liberation Mono',monospace;">C0h</div>
<div class="t" style="left:533.5px;top:318.92px;font-size:11.55px;line-height:14px;color:#000;font-family:'Liberation Mono',monospace;">7ffff7c43f67</div>
<div class="t" style="left:624px;top:318.92px;font-size:11.55px;line-height:14px;color:#1e1ee8;font-family:'Liberation Mono',monospace;">89</div>
<div class="t" style="left:735px;top:318.92px;font-size:11.55px;line-height:14px;color:#1a1a8a;font-family:'Liberation Mono',monospace;">??</div>
<div class="t" style="left:814.5px;top:318.92px;font-size:11.55px;line-height:14px;color:#2a8a2a;font-family:'Liberation Mono',monospace;">89h</div>
<div class="t" style="left:533.5px;top:335.87px;font-size:11.55px;line-height:14px;color:#000;font-family:'Liberation Mono',monospace;">7ffff7c43f68</div>
<div class="t" style="left:624px;top:335.87px;font-size:11.55px;line-height:14px;color:#1e1ee8;font-family:'Liberation Mono',monospace;">fd</div>
<div class="t" style="left:735px;top:335.87px;font-size:11.55px;line-height:14px;color:#1a1a8a;font-family:'Liberation Mono',monospace;">??</div>
<div class="t" style="left:814.5px;top:335.87px;font-size:11.55px;line-height:14px;color:#2a8a2a;font-family:'Liberation Mono',monospace;">FDh</div>
<div class="t" style="left:533.5px;top:352.82px;font-size:11.55px;line-height:14px;color:#000;font-family:'Liberation Mono',monospace;">7ffff7c43f69</div>
<div class="t" style="left:624px;top:352.82px;font-size:11.55px;line-height:14px;color:#1e1ee8;font-family:'Liberation Mono',monospace;">ba</div>
<div class="t" style="left:735px;top:352.82px;font-size:11.55px;line-height:14px;color:#1a1a8a;font-family:'Liberation Mono',monospace;">??</div>
<div class="t" style="left:814.5px;top:352.82px;font-size:11.55px;line-height:14px;color:#2a8a2a;font-family:'Liberation Mono',monospace;">BAh</div>
<div class="t" style="left:533.5px;top:369.77px;font-size:11.55px;line-height:14px;color:#000;font-family:'Liberation Mono',monospace;">7ffff7c43f6a</div>
<div class="t" style="left:624px;top:369.77px;font-size:11.55px;line-height:14px;color:#1e1ee8;font-family:'Liberation Mono',monospace;">01</div>
<div class="t" style="left:735px;top:369.77px;font-size:11.55px;line-height:14px;color:#1a1a8a;font-family:'Liberation Mono',monospace;">??</div>
<div class="t" style="left:814.5px;top:369.77px;font-size:11.55px;line-height:14px;color:#2a8a2a;font-family:'Liberation Mono',monospace;">01h</div>
<div class="a" style="left:532px;top:200px;width:2px;height:15px;background:#f0a0a8"></div>
<svg class="a" style="left:487px;top:199px;" width="16" height="16" viewBox="0 0 16 16"><circle cx="8" cy="8" r="7" fill="#0f64b0"/></svg>
<svg class="a" style="left:533px;top:388px;" width="140" height="3" viewBox="0 0 140 3"><path d="M4 1 H50 M92 1 H98" stroke="#555" stroke-width="1.5" stroke-dasharray="5 2"/></svg>
<div class="a" style="left:503px;top:389px;width:780px;height:12px;background:#f2f2f2"></div>
<div class="a" style="left:510px;top:391px;width:538px;height:7px;background:#dadada;border-radius:4px"></div>
<div class="a" style="left:1258px;top:147px;width:26px;height:242px;background:#f6f6f6"></div>
<div class="a" style="left:1260px;top:170px;width:6px;height:18px;background:#d8d8d8;border-radius:3px"></div>
<div class="a" style="left:1268px;top:172px;width:16px;height:4px;background:#a8bcd8"></div>
<div class="a" style="left:487px;top:409px;width:799px;height:357px;background:#fff;border:1px solid #858585;border-right:2px solid #858585;border-bottom:2px solid #858585"></div>
<div class="a" style="left:488px;top:410px;width:797px;height:22px;background:linear-gradient(to right,#a9a9a9,#f2f2f2);border-top:1px solid #fff;border-left:1px solid #fff"></div>
<div class="a" style="left:488px;top:431px;width:797px;height:1px;background:#858585"></div>
<div class="a" style="left:487px;top:432px;width:799px;height:1px;background:#9a9a9a"></div>
<svg class="a" style="left:492px;top:414px;" width="13" height="13" viewBox="0 0 13 13"><rect x="0.5" y="0.5" width="14" height="12" fill="#e8eef8" stroke="#555"/><rect x="3" y="2" width="10" height="5" fill="#3a60b0"/><rect x="3" y="7" width="10" height="4" fill="#d8f0d8"/><path d="M1.5 1 V12" stroke="#000" stroke-dasharray="1 1.2"/></svg>
<div class="t" style="left:510px;top:412.15px;font-size:14px;line-height:18px;">Listing:  libc.so.6</div>
<svg class="a" style="left:1047px;top:413px;" width="16" height="16" viewBox="0 0 16 16"><rect x="1" y="1" width="8" height="9" fill="#a8a8a8"/><rect x="6" y="6" width="9" height="9" fill="#a8a8a8" stroke="#f2f2f2" stroke-width="0.8"/></svg>
<svg class="a" style="left:1069px;top:413px;" width="16" height="17" viewBox="0 0 16 17"><rect x="1" y="1" width="10" height="12" rx="2" fill="#a8a8a8"/><rect x="5" y="4" width="10" height="12" rx="2" fill="#a0a0a0" stroke="#f2f2f2" stroke-width="0.8"/></svg>
<div class="a" style="left:1094px;top:412px;width:1px;height:17px;background:#c4c4c4"></div>
<svg class="a" style="left:1104px;top:413px;" width="15" height="16" viewBox="0 0 15 16"><path d="M1 1 V11 L3.5 8.5 L6 13 L7.5 12 L5.5 8 H9 Z" fill="#fff" stroke="#000" stroke-width="0.9"/><rect x="7" y="10" width="7" height="5" fill="#f4d040" stroke="#e0b020" stroke-width="0.5"/></svg>
<div class="a" style="left:1128px;top:412px;width:1px;height:17px;background:#c4c4c4"></div>
<svg class="a" style="left:1137px;top:413px;" width="17" height="17" viewBox="0 0 17 17"><rect x="0.5" y="0.5" width="15" height="9" fill="#fff" stroke="#444"/><path d="M1 3.5 H15 M1 6.5 H15 M8 1 V9" stroke="#444" stroke-width="0.8"/><rect x="8" y="4" width="4" height="2" fill="#f0a020"/><path d="M8 10 V15 M5.5 12.5 L8 15.5 L10.5 12.5" stroke="#222" stroke-width="1.3" fill="none"/></svg>
<svg class="a" style="left:1159px;top:413px;" width="17" height="17" viewBox="0 0 17 17"><path d="M1 1 V15 M5 1 V15 M12 1 V15 M16 1 V15" stroke="#4a8ad0" stroke-dasharray="2 1"/><path d="M4 12 L8 7 L10 9 L14 4" stroke="#2a9a2a" stroke-width="2" fill="none"/></svg>
<div class="a" style="left:1184px;top:412px;width:1px;height:17px;background:#c4c4c4"></div>
<svg class="a" style="left:1193px;top:413px;" width="17" height="16" viewBox="0 0 17 16"><rect x="0.5" y="4" width="16" height="11" rx="2" fill="#2a2a2a"/><rect x="4" y="1" width="8" height="4" fill="#3a3a3a" stroke="#111" stroke-width="0.6"/><circle cx="8.5" cy="9.5" r="3.8" fill="#888" stroke="#000"/><circle cx="8.5" cy="9.5" r="1.6" fill="#222"/></svg>
<div class="a" style="left:1218px;top:412px;width:1px;height:17px;background:#c4c4c4"></div>
<svg class="a" style="left:1227px;top:413px;" width="17" height="16" viewBox="0 0 17 16"><rect x="0.5" y="0.5" width="11" height="15" fill="#fff" stroke="#777" stroke-dasharray="1 1"/><path d="M2 4 H9 M2 6 H9" stroke="#aaa"/><rect x="2" y="8" width="8" height="5" fill="#5a8ad0"/><rect x="11" y="0.5" width="5" height="15" fill="#e0b030" stroke="#b08010" stroke-width="0.6"/></svg>
<svg class="a" style="left:1249.5px;top:419px;" width="7" height="4" viewBox="0 0 7 4"><path d="M0 0 H7 L3.5 4 Z" fill="#000"/></svg>
<div class="a" style="left:1261px;top:412px;width:1px;height:17px;background:#c4c4c4"></div>
<svg class="a" style="left:1267.0px;top:415.5px;" width="11" height="11" viewBox="0 0 11 11"><path d="M1 1 L10 10 M10 1 L1 10" stroke="#000" stroke-width="2.2"/></svg>
<div class="a" style="left:488px;top:432px;width:797px;height:26px;background:#f2f2f2"></div>
<div class="a" style="left:488px;top:433px;width:108px;height:23px;background:#fff;border-left:1px solid #888"></div>
<div class="a" style="left:594px;top:436px;width:2px;height:20px;background:#999"></div>
<div class="t" style="left:506px;top:435.89px;font-size:13.3px;line-height:17px;">termmines</div>
<div class="a" style="left:596px;top:433px;width:101px;height:23px;background:#2b6ec1"></div>
<div class="a" style="left:596px;top:433px;width:101px;height:1px;background:#5fd0f5"></div>
<div class="a" style="left:488px;top:455px;width:797px;height:3px;background:#2b6ec1"></div>
<div class="t" style="left:614.5px;top:435.89px;font-size:13.3px;line-height:17px;color:#fff;">*libc.so.6</div>
<svg class="a" style="left:681px;top:439px;" width="11" height="11" viewBox="0 0 11 11"><path d="M1.5 1.5 L9.5 9.5 M9.5 1.5 L1.5 9.5" stroke="#fff" stroke-width="2.4"/></svg>
<div class="a" style="left:488px;top:458px;width:796px;height:306px;background:#fff"></div>
<div class="a" style="left:488px;top:458px;width:15px;height:306px;background:#f2f2f2"></div>
<div class="a" style="left:494px;top:463px;width:3px;height:151px;background:#a8c0e0"></div>
<div class="a" style="left:494px;top:628px;width:3px;height:126px;background:#9a9a9a"></div>
<svg class="a" style="left:487px;top:613px;" width="18" height="16" viewBox="0 0 18 16"><circle cx="8" cy="8" r="7" fill="#0f64b0"/><path d="M1 7 H12" stroke="#000" stroke-width="1.6"/><path d="M11 3.5 L16 7 L11 10.5 Z" fill="#000"/></svg>
<div class="a" style="left:573px;top:458px;width:5px;height:306px;background:#f0f0f0"></div>
<div class="a" style="left:574px;top:606px;width:2px;height:2px;background:#bbb"></div>
<div class="a" style="left:574px;top:611px;width:2px;height:2px;background:#bbb"></div>
<div class="a" style="left:574px;top:616px;width:2px;height:2px;background:#bbb"></div>
<div class="a" style="left:578px;top:461px;width:680px;height:170px;background:#cfdcec"></div>
<div class="t" style="left:778.5px;top:482.92px;font-size:11.55px;line-height:14px;color:#808080;font-family:'Liberation Mono',monospace;">**************************************************************</div>
<div class="t" style="left:778.5px;top:499.92px;font-size:11.55px;line-height:14px;color:#808080;font-family:'Liberation Mono',monospace;">*</div>
<div class="t" style="left:967px;top:496.92px;font-size:11.55px;line-height:14px;color:#808080;font-family:'Liberation Mono',monospace;">FUNCTION</div>
<div class="t" style="left:1205px;top:499.92px;font-size:11.55px;line-height:14px;color:#808080;font-family:'Liberation Mono',monospace;">*</div>
<div class="t" style="left:778.5px;top:516.92px;font-size:11.55px;line-height:14px;color:#808080;font-family:'Liberation Mono',monospace;">**************************************************************</div>
<div class="t" style="left:778.5px;top:530.92px;font-size:11.55px;line-height:14px;color:#000;font-family:'Liberation Mono',monospace;">undefined</div>
<div class="t" style="left:848px;top:530.92px;font-size:11.55px;line-height:14px;color:#f020f0;font-family:'Liberation Mono',monospace;">srandom</div>
<div class="t" style="left:897px;top:530.92px;font-size:11.55px;line-height:14px;color:#000;font-family:'Liberation Mono',monospace;">()</div>
<div class="a" style="left:778px;top:529px;width:2px;height:17px;background:#f0a0b0"></div>
<svg class="a" style="left:579px;top:549px;" width="9" height="9" viewBox="0 0 9 9"><rect x="0.5" y="0.5" width="8" height="8" fill="#fff" stroke="#4a4a8a"/><path d="M2 4.5 H7" stroke="#4a4a8a"/></svg>
<div class="t" style="left:668.5px;top:547.92px;font-size:11.55px;line-height:14px;color:#1a8a8a;font-family:'Liberation Mono',monospace;">undefined</div>
<svg class="a" style="left:778px;top:543px;" width="17" height="15" viewBox="0 0 17 15"><path d="M8.5 1 L16 14 H1 Z" fill="#f8d040" stroke="#c09010"/><path d="M8.5 5 V10 M8.5 11.5 V13" stroke="#704000" stroke-width="1.6"/></svg>
<div class="t" style="left:797px;top:547.92px;font-size:11.55px;line-height:14px;color:#e8101a;font-family:'Liberation Mono',monospace;">&lt;UNASSIGNED&gt;</div>
<div class="t" style="left:899px;top:547.92px;font-size:11.55px;line-height:14px;color:#1a8a8a;font-family:'Liberation Mono',monospace;">&lt;RETURN&gt;</div>
<div class="t" style="left:1116px;top:564.92px;font-size:11.55px;line-height:14px;color:#207a20;font-family:'Liberation Mono',monospace;">XREF[1]:</div>
<div class="t" style="left:1206px;top:564.92px;font-size:11.55px;line-height:14px;color:#207a20;font-family:'Liberation Mono',monospace;">Entry Po</div>
<div class="t" style="left:778.5px;top:564.92px;font-size:11.55px;line-height:14px;color:#f020f0;font-family:'Liberation Mono',monospace;">__srandom</div>
<div class="t" style="left:778.5px;top:581.92px;font-size:11.55px;line-height:14px;color:#f020f0;font-family:'Liberation Mono',monospace;">srand</div>
<div class="t" style="left:778.5px;top:598.92px;font-size:11.55px;line-height:14px;color:#f020f0;font-family:'Liberation Mono',monospace;">srandom</div>
<div class="t" style="left:635.5px;top:615.92px;font-size:11.55px;line-height:14px;color:#000;font-family:'Liberation Mono',monospace;">00143f60</div>
<div class="t" style="left:699px;top:615.92px;font-size:11.55px;line-height:14px;color:#1e1ee8;font-family:'Liberation Mono',monospace;">f3 0f 1e fa</div>
<div class="t" style="left:808.5px;top:615.92px;font-size:11.55px;line-height:14px;color:#1a1a8a;font-family:'Liberation Mono',monospace;">ENDBR64</div>
<div class="t" style="left:635.5px;top:632.92px;font-size:11.55px;line-height:14px;color:#000;font-family:'Liberation Mono',monospace;">00143f64</div>
<div class="t" style="left:699px;top:632.92px;font-size:11.55px;line-height:14px;color:#1e1ee8;font-family:'Liberation Mono',monospace;">55</div>
<div class="t" style="left:808.5px;top:632.92px;font-size:11.55px;line-height:14px;color:#1a1a8a;font-family:'Liberation Mono',monospace;">PUSH</div>
<div class="t" style="left:635.5px;top:649.92px;font-size:11.55px;line-height:14px;color:#000;font-family:'Liberation Mono',monospace;">00143f65</div>
<div class="t" style="left:699px;top:649.92px;font-size:11.55px;line-height:14px;color:#1e1ee8;font-family:'Liberation Mono',monospace;">31 c0</div>
<div class="t" style="left:808.5px;top:649.92px;font-size:11.55px;line-height:14px;color:#1a1a8a;font-family:'Liberation Mono',monospace;">XOR</div>
<div class="t" style="left:635.5px;top:666.92px;font-size:11.55px;line-height:14px;color:#000;font-family:'Liberation Mono',monospace;">00143f67</div>
<div class="t" style="left:699px;top:666.92px;font-size:11.55px;line-height:14px;color:#1e1ee8;font-family:'Liberation Mono',monospace;">89 fd</div>
<div class="t" style="left:808.5px;top:666.92px;font-size:11.55px;line-height:14px;color:#1a1a8a;font-family:'Liberation Mono',monospace;">MOV</div>
<div class="t" style="left:635.5px;top:683.92px;font-size:11.55px;line-height:14px;color:#000;font-family:'Liberation Mono',monospace;">00143f69</div>
<div class="t" style="left:699px;top:683.92px;font-size:11.55px;line-height:14px;color:#1e1ee8;font-family:'Liberation Mono',monospace;">ba 01 00</div>
<div class="t" style="left:808.5px;top:683.92px;font-size:11.55px;line-height:14px;color:#1a1a8a;font-family:'Liberation Mono',monospace;">MOV</div>
<div class="t" style="left:699px;top:700.92px;font-size:11.55px;line-height:14px;color:#1e1ee8;font-family:'Liberation Mono',monospace;">00 00</div>
<div class="t" style="left:635.5px;top:717.92px;font-size:11.55px;line-height:14px;color:#000;font-family:'Liberation Mono',monospace;">00143f6e</div>
<div class="t" style="left:699px;top:717.92px;font-size:11.55px;line-height:14px;color:#1e1ee8;font-family:'Liberation Mono',monospace;">f0 0f b1</div>
<div class="t" style="left:808.5px;top:717.92px;font-size:11.55px;line-height:14px;color:#1a1a8a;font-family:'Liberation Mono',monospace;">CMPXCHG...</div>
<div class="t" style="left:699px;top:734.92px;font-size:11.55px;line-height:14px;color:#1e1ee8;font-family:'Liberation Mono',monospace;">15 32 88</div>
<div class="t" style="left:888.5px;top:632.92px;font-size:11.55px;line-height:14px;color:#8a8a10;font-family:'Liberation Mono',monospace;">RBP</div>
<div class="t" style="left:888.5px;top:649.92px;font-size:11.55px;line-height:14px;color:#8a8a10;font-family:'Liberation Mono',monospace;">EAX</div>
<div class="t" style="left:888.5px;top:666.92px;font-size:11.55px;line-height:14px;color:#8a8a10;font-family:'Liberation Mono',monospace;">EBP</div>
<div class="t" style="left:888.5px;top:683.92px;font-size:11.55px;line-height:14px;color:#8a8a10;font-family:'Liberation Mono',monospace;">EDX</div>
<div class="t" style="left:909.5px;top:649.92px;font-size:11.55px;line-height:14px;color:#000;font-family:'Liberation Mono',monospace;">,</div>
<div class="t" style="left:916.5px;top:649.92px;font-size:11.55px;line-height:14px;color:#8a8a10;font-family:'Liberation Mono',monospace;">EAX</div>
<div class="t" style="left:909.5px;top:666.92px;font-size:11.55px;line-height:14px;color:#000;font-family:'Liberation Mono',monospace;">,</div>
<div class="t" style="left:916.5px;top:666.92px;font-size:11.55px;line-height:14px;color:#8a8a10;font-family:'Liberation Mono',monospace;">EDI</div>
<div class="t" style="left:909.5px;top:683.92px;font-size:11.55px;line-height:14px;color:#000;font-family:'Liberation Mono',monospace;">,</div>
<div class="t" style="left:916.5px;top:683.92px;font-size:11.55px;line-height:14px;color:#207a20;font-family:'Liberation Mono',monospace;">0x1</div>
<div class="t" style="left:888.5px;top:717.92px;font-size:11.55px;line-height:14px;color:#000;font-family:'Liberation Mono',monospace;">dword ptr [</div>
<div class="t" style="left:965.5px;top:717.92px;font-size:11.55px;line-height:14px;color:#1e1ee8;font-family:'Liberation Mono',monospace;">lock</div>
<div class="t" style="left:993.5px;top:717.92px;font-size:11.55px;line-height:14px;color:#000;font-family:'Liberation Mono',monospace;">],</div>
<div class="t" style="left:1007.5px;top:717.92px;font-size:11.55px;line-height:14px;color:#8a8a10;font-family:'Liberation Mono',monospace;">EDX</div>
<div class="t" style="left:1228px;top:717.92px;font-size:11.55px;line-height:14px;color:#b0b0b0;font-family:'Liberation Mono',monospace;">= ??</div>
<div class="a" style="left:580px;top:757px;width:440px;height:6px;background:#dadada;border-radius:3px"></div>
<div class="a" style="left:578px;top:754px;width:680px;height:1px;background:#f0f0f0"></div>
<div class="a" style="left:1258px;top:458px;width:26px;height:306px;background:#f4f4f4"></div>
<div class="a" style="left:1262px;top:481px;width:5px;height:17px;background:#d8d8d8;border-radius:3px"></div>
<div class="a" style="left:1275px;top:466px;width:9px;height:85px;background:#a8a8a8"></div>
<div class="a" style="left:1275px;top:556px;width:9px;height:4px;background:#a8a8a8"></div>
<div class="a" style="left:1275px;top:564px;width:9px;height:12px;background:#a8a8a8"></div>
<div class="a" style="left:1275px;top:578px;width:9px;height:6px;background:#a8a8a8"></div>
<div class="a" style="left:1275px;top:587px;width:9px;height:3px;background:#a8a8a8"></div>
<div class="a" style="left:1275px;top:594px;width:9px;height:66px;background:#a8a8a8"></div>
<div class="a" style="left:1275px;top:666px;width:9px;height:12px;background:#a8a8a8"></div>
<div class="a" style="left:1275px;top:703px;width:9px;height:8px;background:#a8a8a8"></div>
<div class="a" style="left:1275px;top:714px;width:9px;height:4px;background:#a8a8a8"></div>
<svg class="a" style="left:1268px;top:466px;" width="11" height="13" viewBox="0 0 11 13"><rect x="0.5" y="0.5" width="10" height="12" fill="#d8c090" stroke="#f0a010"/><path d="M0 4.5 H11" stroke="#f0a010" stroke-width="0.8"/><path d="M0 8.5 H11" stroke="#f0a010" stroke-width="0.8"/></svg>
<svg class="a" style="left:1268px;top:489px;" width="11" height="5" viewBox="0 0 11 5"><rect x="0.5" y="0.5" width="10" height="4" fill="#d8c090" stroke="#f0a010"/></svg>
<svg class="a" style="left:1268px;top:512px;" width="11" height="16" viewBox="0 0 11 16"><rect x="0.5" y="0.5" width="10" height="15" fill="#d8c090" stroke="#f0a010"/><path d="M0 4.5 H11" stroke="#f0a010" stroke-width="0.8"/><path d="M0 8.5 H11" stroke="#f0a010" stroke-width="0.8"/><path d="M0 12.5 H11" stroke="#f0a010" stroke-width="0.8"/></svg>
<svg class="a" style="left:1268px;top:531px;" width="11" height="13" viewBox="0 0 11 13"><rect x="0.5" y="0.5" width="10" height="12" fill="#d8c090" stroke="#f0a010"/><path d="M0 4.5 H11" stroke="#f0a010" stroke-width="0.8"/><path d="M0 8.5 H11" stroke="#f0a010" stroke-width="0.8"/></svg>
<svg class="a" style="left:1268px;top:547px;" width="11" height="6" viewBox="0 0 11 6"><rect x="0.5" y="0.5" width="10" height="5" fill="#d8c090" stroke="#f0a010"/></svg>
<svg class="a" style="left:1268px;top:557px;" width="11" height="4" viewBox="0 0 11 4"><rect x="0.5" y="0.5" width="10" height="3" fill="#d8c090" stroke="#f0a010"/></svg>
<svg class="a" style="left:1268px;top:577px;" width="11" height="6" viewBox="0 0 11 6"><rect x="0.5" y="0.5" width="10" height="5" fill="#d8c090" stroke="#f0a010"/></svg>
<svg class="a" style="left:1268px;top:594px;" width="11" height="68" viewBox="0 0 11 68"><rect x="0.5" y="0.5" width="10" height="67" fill="#d8c090" stroke="#f0a010"/><path d="M0 4.5 H11" stroke="#f0a010" stroke-width="0.8"/><path d="M0 8.5 H11" stroke="#f0a010" stroke-width="0.8"/><path d="M0 12.5 H11" stroke="#f0a010" stroke-width="0.8"/><path d="M0 16.5 H11" stroke="#f0a010" stroke-width="0.8"/><path d="M0 20.5 H11" stroke="#f0a010" stroke-width="0.8"/><path d="M0 24.5 H11" stroke="#f0a010" stroke-width="0.8"/><path d="M0 28.5 H11" stroke="#f0a010" stroke-width="0.8"/><path d="M0 32.5 H11" stroke="#f0a010" stroke-width="0.8"/><path d="M0 36.5 H11" stroke="#f0a010" stroke-width="0.8"/><path d="M0 40.5 H11" stroke="#f0a010" stroke-width="0.8"/><path d="M0 44.5 H11" stroke="#f0a010" stroke-width="0.8"/><path d="M0 48.5 H11" stroke="#f0a010" stroke-width="0.8"/><path d="M0 52.5 H11" stroke="#f0a010" stroke-width="0.8"/><path d="M0 56.5 H11" stroke="#f0a010" stroke-width="0.8"/><path d="M0 60.5 H11" stroke="#f0a010" stroke-width="0.8"/><path d="M0 64.5 H11" stroke="#f0a010" stroke-width="0.8"/></svg>
<svg class="a" style="left:1268px;top:571px;" width="11" height="5" viewBox="0 0 11 5"><rect x="0.5" y="0.5" width="10" height="4" fill="#e0a0a8" stroke="#d02040"/></svg>
<svg class="a" style="left:1268px;top:670px;" width="11" height="5" viewBox="0 0 11 5"><rect x="0.5" y="0.5" width="10" height="4" fill="#e0a0a8" stroke="#d02040"/></svg>
<svg class="a" style="left:1268px;top:706px;" width="11" height="5" viewBox="0 0 11 5"><rect x="0.5" y="0.5" width="10" height="4" fill="#f8f0a0" stroke="#f0d020"/></svg>
<div class="a" style="left:1291px;top:78px;width:627px;height:658px;background:#fff;border:1px solid #858585;border-right:2px solid #858585;border-bottom:2px solid #858585"></div>
<div class="a" style="left:1292px;top:79px;width:625px;height:23px;background:linear-gradient(to right,#a9a9a9,#f2f2f2);border-top:1px solid #fff;border-left:1px solid #fff"></div>
<div class="a" style="left:1292px;top:101px;width:625px;height:1px;background:#858585"></div>
<div class="a" style="left:1291px;top:102px;width:627px;height:1px;background:#9a9a9a"></div>
<svg class="a" style="left:1296px;top:82px;" width="16" height="16" viewBox="0 0 16 16"><circle cx="8" cy="8" r="7" fill="#0f64b0"/><path d="M4.1499999999999995 4.1499999999999995 L11.15 11.15 L12.899999999999999 6.6 A4.8999999999999995 4.8999999999999995 0 0 0 6.6 3.1000000000000005 Z" fill="#fff"/></svg>
<div class="t" style="left:1313px;top:82.15px;font-size:14px;line-height:18px;">Breakpoints</div>
<svg class="a" style="left:1639px;top:82px;" width="16" height="16" viewBox="0 0 16 16"><circle cx="8" cy="8" r="7" fill="#6cc06c" stroke="#3a9a3a"/><path d="M8 4 V12 M4 8 H12" stroke="#fff" stroke-width="2.4"/></svg>
<svg class="a" style="left:1661px;top:88px;" width="7" height="4" viewBox="0 0 7 4"><path d="M0 0 H7 L3.5 4 Z" fill="#000"/></svg>
<svg class="a" style="left:1675px;top:82px;" width="16" height="16" viewBox="0 0 16 16"><circle cx="8" cy="8" r="7" fill="#8a8a8a"/></svg>
<svg class="a" style="left:1697px;top:82px;" width="17" height="16" viewBox="0 0 17 16"><circle cx="8" cy="9" r="7" fill="#0f64b0"/><path d="M13 1 L14 4 L17 4 L14.5 6 L15.5 9 L13 7 L10.5 9 L11.5 6 L9 4 L12 4 Z" fill="#f0c020"/></svg>
<svg class="a" style="left:1719px;top:82px;" width="16" height="16" viewBox="0 0 16 16"><circle cx="8" cy="8" r="6.3" fill="#fff" stroke="#9a9a9a" stroke-width="2"/><circle cx="8" cy="8" r="4" fill="#aaa"/></svg>
<svg class="a" style="left:1741px;top:82px;" width="17" height="16" viewBox="0 0 17 16"><circle cx="8" cy="9" r="6" fill="#fff" stroke="#0f64b0" stroke-width="2.2"/><path d="M13 1 L14 4 L17 4 L14.5 6 L15.5 9 L13 7 L10.5 9 L11.5 6 L9 4 L12 4 Z" fill="#f0c020"/></svg>
<svg class="a" style="left:1763px;top:82px;" width="16" height="16" viewBox="0 0 16 16"><circle cx="5" cy="5" r="4" fill="#aaa"/><circle cx="11" cy="11" r="4" fill="#aaa"/></svg>
<div class="a" style="left:1788px;top:82px;width:1px;height:17px;background:#c4c4c4"></div>
<svg class="a" style="left:1797px;top:82px;" width="16" height="16" viewBox="0 0 16 16"><circle cx="8" cy="8" r="7.3" fill="#a8a8a8"/><path d="M5 5 L11 11 M11 5 L5 11" stroke="#ddd" stroke-width="2"/></svg>
<svg class="a" style="left:1819px;top:82px;" width="17" height="16" viewBox="0 0 17 16"><circle cx="8" cy="9" r="7" fill="#0f64b0"/><path d="M5 6 L11 12 M11 6 L5 12" stroke="#fff" stroke-width="2.2"/><path d="M13 1 L14 4 L17 4 L14.5 6 L15.5 9 L13 7 L10.5 9 L11.5 6 L9 4 L12 4 Z" fill="#f0c020"/></svg>
<div class="a" style="left:1844px;top:82px;width:1px;height:17px;background:#c4c4c4"></div>
<svg class="a" style="left:1853px;top:82px;" width="17" height="17" viewBox="0 0 17 17"><circle cx="7" cy="7" r="6" fill="#eee" stroke="#777" stroke-width="1.2"/><path d="M11 11 L16 16" stroke="#777" stroke-width="1.6"/><path d="M4.5 5 L7 3.5 M9.5 5 L7 3.5 M4.5 9 L7 10.5 M9.5 9 L7 10.5" stroke="#555"/></svg>
<svg class="a" style="left:1874px;top:82px;" width="16" height="16" viewBox="0 0 16 16"><path d="M1 3.5 H15 M1 8 H15 M1 12.5 H15" stroke="#8a8a8a" stroke-width="1.6"/><circle cx="5" cy="3.5" r="2.3" fill="#8a8a8a"/><path d="M9.5 5 L13 8 L9.5 11 Z" fill="#8a8a8a"/><circle cx="7" cy="12.5" r="2.3" fill="#8a8a8a"/></svg>
<div class="a" style="left:1895px;top:82px;width:1px;height:17px;background:#c4c4c4"></div>
<svg class="a" style="left:1900.5px;top:84.5px;" width="11" height="11" viewBox="0 0 11 11"><path d="M1 1 L10 10 M10 1 L1 10" stroke="#000" stroke-width="2.2"/></svg>
<div class="a" style="left:1292px;top:103px;width:625px;height:24px;background:#fff;border-bottom:1px solid #dadada"></div>
<div class="a" style="left:1315px;top:103px;width:1px;height:24px;background:#dedede"></div>
<div class="a" style="left:1437px;top:103px;width:1px;height:24px;background:#dedede"></div>
<div class="a" style="left:1559px;top:103px;width:1px;height:24px;background:#dedede"></div>
<div class="a" style="left:1651px;top:103px;width:1px;height:24px;background:#dedede"></div>
<div class="a" style="left:1720px;top:103px;width:1px;height:24px;background:#dedede"></div>
<div class="a" style="left:1842px;top:103px;width:1px;height:24px;background:#dedede"></div>
<div class="a" style="left:1887px;top:103px;width:1px;height:24px;background:#dedede"></div>
<div class="t" style="left:1299px;top:107.15px;font-size:14px;line-height:18px;">...</div>
<div class="t" style="left:1362.5px;top:107.15px;font-size:14px;line-height:18px;">Na...</div>
<svg class="a" style="left:1394px;top:107px;" width="16" height="14" viewBox="0 0 16 14"><path d="M1.5 1 V13 H14.5 L13 11 H11 L10 9 H8 L7 7 H5 L4 4.5 H2.5 Z" fill="#d4d4d4" stroke="#555" stroke-width="1"/><path d="M2 11 H12 M2 9 H9.5 M2 7 H6.5" stroke="#888" stroke-width="0.8"/></svg>
<div class="t" style="left:1411px;top:104.15px;font-size:14px;line-height:18px;font-weight:bold;">3</div>
<div class="t" style="left:1481px;top:107.15px;font-size:14px;line-height:18px;">Add..</div>
<svg class="a" style="left:1516px;top:107px;" width="16" height="14" viewBox="0 0 16 14"><path d="M1.5 1 V13 H14.5 L13 11 H11 L10 9 H8 L7 7 H5 L4 4.5 H2.5 Z" fill="#d4d4d4" stroke="#555" stroke-width="1"/><path d="M2 11 H12 M2 9 H9.5 M2 7 H6.5" stroke="#888" stroke-width="0.8"/></svg>
<div class="t" style="left:1533px;top:104.15px;font-size:14px;line-height:18px;font-weight:bold;">2</div>
<div class="t" style="left:1599px;top:107.15px;font-size:14px;line-height:18px;">..</div>
<svg class="a" style="left:1607px;top:107px;" width="16" height="14" viewBox="0 0 16 14"><path d="M1.5 1 V13 H14.5 L13 11 H11 L10 9 H8 L7 7 H5 L4 4.5 H2.5 Z" fill="#d4d4d4" stroke="#555" stroke-width="1"/><path d="M2 11 H12 M2 9 H9.5 M2 7 H6.5" stroke="#888" stroke-width="0.8"/></svg>
<div class="t" style="left:1624px;top:104.15px;font-size:14px;line-height:18px;font-weight:bold;">1</div>
<div class="t" style="left:1664px;top:107.15px;font-size:14px;line-height:18px;">Length</div>
<div class="t" style="left:1765px;top:107.15px;font-size:14px;line-height:18px;">Kinds</div>
<div class="t" style="left:1852px;top:107.15px;font-size:14px;line-height:18px;">Lo...</div>
<div class="t" style="left:1898px;top:107.15px;font-size:14px;line-height:18px;">...</div>
<div class="a" style="left:1292px;top:127px;width:625px;height:21px;background:#eef5fd"></div>
<svg class="a" style="left:1296px;top:130px;" width="16" height="16" viewBox="0 0 16 16"><circle cx="8" cy="8" r="7" fill="#0f64b0"/></svg>
<div class="t" style="left:1443.3px;top:131.51px;font-size:13.1px;line-height:16px;color:#222;font-family:'Liberation Mono',monospace;">00143ef0</div>
<div class="t" style="left:1565px;top:129.15px;font-size:14px;line-height:18px;">libc.so.6</div>
<div class="t" style="left:1675px;width:40px;text-align:right;top:131.51px;font-size:13.1px;line-height:16px;color:#222;font-family:'Liberation Mono',monospace;">0x1</div>
<div class="t" style="left:1726.3px;top:129.89px;font-size:13.3px;line-height:17px;">SW_EXECUTE</div>
<div class="t" style="left:1862px;width:20px;text-align:right;top:131.51px;font-size:13.1px;line-height:16px;color:#222;font-family:'Liberation Mono',monospace;">1</div>
<div class="a" style="left:1897px;top:132px;width:14px;height:13px;background:#f4f4f4;border:1px solid #c8c8c8;border-radius:2px"></div>
<svg class="a" style="left:1296px;top:150px;" width="16" height="16" viewBox="0 0 16 16"><circle cx="8" cy="8" r="7" fill="#0f64b0"/></svg>
<div class="t" style="left:1443.3px;top:151.51px;font-size:13.1px;line-height:16px;color:#222;font-family:'Liberation Mono',monospace;">00143f60</div>
<div class="t" style="left:1565px;top:149.15px;font-size:14px;line-height:18px;">libc.so.6</div>
<div class="t" style="left:1675px;width:40px;text-align:right;top:151.51px;font-size:13.1px;line-height:16px;color:#222;font-family:'Liberation Mono',monospace;">0x1</div>
<div class="t" style="left:1726.3px;top:149.89px;font-size:13.3px;line-height:17px;">SW_EXECUTE</div>
<div class="t" style="left:1862px;width:20px;text-align:right;top:151.51px;font-size:13.1px;line-height:16px;color:#222;font-family:'Liberation Mono',monospace;">1</div>
<div class="a" style="left:1897px;top:152px;width:14px;height:13px;background:#f4f4f4;border:1px solid #c8c8c8;border-radius:2px"></div>
<div class="a" style="left:1292px;top:382px;width:625px;height:2px;background:#909090"></div>
<div class="a" style="left:1292px;top:384px;width:625px;height:28px;background:#f2f2f2"></div>
<div class="t" style="left:1297px;top:388.15px;font-size:14px;line-height:18px;">Filter:</div>
<div class="a" style="left:1343px;top:386px;width:508px;height:24px;background:#fff;border:1px solid #c2c2c2"></div>
<svg class="a" style="left:1857px;top:389.0px;" width="18" height="18" viewBox="0 0 18 18"><path d="M3.5 1.5 H11.5 L15.5 5.5 V16.5 H3.5 Z" fill="#d8e8fa" stroke="#3a7ad8" stroke-width="1.1"/><path d="M11.5 1.5 V5.5 H15.5" fill="none" stroke="#3a7ad8" stroke-width="0.8"/><path d="M5 5.5 L1.5 8.5 L5 11.5 M8 5.5 L11.5 8.5 L8 11.5" fill="none" stroke="#3a7ad0" stroke-width="1.6"/><path d="M5 14 H14" stroke="#5a9ae0" stroke-width="1.2"/></svg>
<svg class="a" style="left:1884px;top:390.0px;" width="16" height="16" viewBox="0 0 16 16"><path d="M1 3.5 H15 M1 8 H15 M1 12.5 H15" stroke="#8a8a8a" stroke-width="1.6"/><circle cx="5" cy="3.5" r="2.3" fill="#8a8a8a"/><path d="M9.5 5 L13 8 L9.5 11 Z" fill="#8a8a8a"/><circle cx="7" cy="12.5" r="2.3" fill="#8a8a8a"/></svg>
<svg class="a" style="left:1907px;top:396.0px;" width="7" height="4" viewBox="0 0 7 4"><path d="M0 0 H7 L3.5 4 Z" fill="#000"/></svg>
<div class="a" style="left:1292px;top:412px;width:625px;height:7px;background:#f2f2f2"></div>
<div class="a" style="left:1600px;top:415px;width:2px;height:2px;background:#aaa"></div>
<div class="a" style="left:1605px;top:415px;width:2px;height:2px;background:#aaa"></div>
<div class="a" style="left:1610px;top:415px;width:2px;height:2px;background:#aaa"></div>
<div class="a" style="left:1292px;top:419px;width:625px;height:1px;background:#c8c8c8"></div>
<div class="a" style="left:1292px;top:420px;width:625px;height:24px;background:#fff;border-bottom:1px solid #dadada"></div>
<div class="a" style="left:1315px;top:420px;width:1px;height:24px;background:#dedede"></div>
<div class="a" style="left:1429px;top:420px;width:1px;height:24px;background:#dedede"></div>
<div class="a" style="left:1544px;top:420px;width:1px;height:24px;background:#dedede"></div>
<div class="a" style="left:1658px;top:420px;width:1px;height:24px;background:#dedede"></div>
<div class="a" style="left:1773px;top:420px;width:1px;height:24px;background:#dedede"></div>
<div class="a" style="left:1887px;top:420px;width:1px;height:24px;background:#dedede"></div>
<div class="t" style="left:1299px;top:423.15px;font-size:14px;line-height:18px;">...</div>
<div class="t" style="left:1358px;top:423.15px;font-size:14px;line-height:18px;">Na..</div>
<svg class="a" style="left:1386px;top:423px;" width="16" height="14" viewBox="0 0 16 14"><path d="M1.5 1 V13 H14.5 L13 11 H11 L10 9 H8 L7 7 H5 L4 4.5 H2.5 Z" fill="#d4d4d4" stroke="#555" stroke-width="1"/><path d="M2 11 H12 M2 9 H9.5 M2 7 H6.5" stroke="#888" stroke-width="0.8"/></svg>
<div class="t" style="left:1403px;top:420.15px;font-size:14px;line-height:18px;font-weight:bold;">2</div>
<div class="t" style="left:1473px;top:423.15px;font-size:14px;line-height:18px;">Ad...</div>
<svg class="a" style="left:1501px;top:423px;" width="16" height="14" viewBox="0 0 16 14"><path d="M1.5 1 V13 H14.5 L13 11 H11 L10 9 H8 L7 7 H5 L4 4.5 H2.5 Z" fill="#d4d4d4" stroke="#555" stroke-width="1"/><path d="M2 11 H12 M2 9 H9.5 M2 7 H6.5" stroke="#888" stroke-width="0.8"/></svg>
<div class="t" style="left:1518px;top:420.15px;font-size:14px;line-height:18px;font-weight:bold;">1</div>
<div class="t" style="left:1585px;top:423.15px;font-size:14px;line-height:18px;">Trace</div>
<div class="t" style="left:1684px;top:423.15px;font-size:14px;line-height:18px;">Comment</div>
<div class="t" style="left:1797.5px;top:423.15px;font-size:14px;line-height:18px;">Expression</div>
<div class="t" style="left:1898px;top:423.15px;font-size:14px;line-height:18px;">...</div>
<div class="a" style="left:1292px;top:444px;width:625px;height:21px;background:#eef5fd"></div>
<svg class="a" style="left:1296px;top:447px;" width="16" height="16" viewBox="0 0 16 16"><circle cx="8" cy="8" r="7" fill="#0f64b0"/></svg>
<div class="t" style="left:1321px;top:446.15px;font-size:14px;line-height:18px;">[3][1]</div>
<div class="t" style="left:1435.5px;top:448.51px;font-size:13.1px;line-height:16px;color:#222;font-family:'Liberation Mono',monospace;">7ffff7c43ef0</div>
<div class="t" style="left:1549.7px;top:446.15px;font-size:14px;line-height:18px;">termmines</div>
<div class="t" style="left:1779px;top:446.15px;font-size:14px;line-height:18px;">rand</div>
<div class="a" style="left:1897px;top:448px;width:14px;height:14px;background:#f4f4f4;border:1px solid #c8c8c8;border-radius:2px"></div>
<svg class="a" style="left:1296px;top:467px;" width="16" height="16" viewBox="0 0 16 16"><circle cx="8" cy="8" r="7" fill="#0f64b0"/></svg>
<div class="t" style="left:1321px;top:466.15px;font-size:14px;line-height:18px;">[2][1]</div>
<div class="t" style="left:1435.5px;top:468.51px;font-size:13.1px;line-height:16px;color:#222;font-family:'Liberation Mono',monospace;">7ffff7c43f60</div>
<div class="t" style="left:1549.7px;top:466.15px;font-size:14px;line-height:18px;">termmines</div>
<div class="t" style="left:1779px;top:466.15px;font-size:14px;line-height:18px;">srand</div>
<div class="a" style="left:1897px;top:468px;width:14px;height:14px;background:#f4f4f4;border:1px solid #c8c8c8;border-radius:2px"></div>
<div class="a" style="left:1292px;top:703px;width:625px;height:1px;background:#909090"></div>
<div class="a" style="left:1292px;top:704px;width:625px;height:30px;background:#f2f2f2"></div>
<div class="t" style="left:1297px;top:708.15px;font-size:14px;line-height:18px;">Filter:</div>
<div class="a" style="left:1343px;top:706px;width:509px;height:26px;background:#fff;border:1px solid #c2c2c2"></div>
<svg class="a" style="left:1858px;top:710.0px;" width="18" height="18" viewBox="0 0 18 18"><path d="M3.5 1.5 H11.5 L15.5 5.5 V16.5 H3.5 Z" fill="#d8e8fa" stroke="#3a7ad8" stroke-width="1.1"/><path d="M11.5 1.5 V5.5 H15.5" fill="none" stroke="#3a7ad8" stroke-width="0.8"/><path d="M5 5.5 L1.5 8.5 L5 11.5 M8 5.5 L11.5 8.5 L8 11.5" fill="none" stroke="#3a7ad0" stroke-width="1.6"/><path d="M5 14 H14" stroke="#5a9ae0" stroke-width="1.2"/></svg>
<svg class="a" style="left:1885px;top:711.0px;" width="16" height="16" viewBox="0 0 16 16"><path d="M1 3.5 H15 M1 8 H15 M1 12.5 H15" stroke="#8a8a8a" stroke-width="1.6"/><circle cx="5" cy="3.5" r="2.3" fill="#8a8a8a"/><path d="M9.5 5 L13 8 L9.5 11 Z" fill="#8a8a8a"/><circle cx="7" cy="12.5" r="2.3" fill="#8a8a8a"/></svg>
<svg class="a" style="left:1908px;top:717.0px;" width="7" height="4" viewBox="0 0 7 4"><path d="M0 0 H7 L3.5 4 Z" fill="#000"/></svg>
<div class="a" style="left:1291px;top:736px;width:628px;height:1px;background:#b8b8b8"></div>
<div class="a" style="left:1815px;top:734px;width:64px;height:3px;background:#8fb8e0"></div>
<svg class="a" style="left:1295px;top:747px;" width="8" height="13" viewBox="0 0 8 13"><path d="M7 1 L1.5 6.5 L7 12" stroke="#444" stroke-width="1.3" fill="none"/></svg>
<svg class="a" style="left:1309px;top:742px;" width="15" height="17" viewBox="0 0 15 17"><text x="7.5" y="7" text-anchor="middle" font-family="Liberation Sans" font-weight="bold" font-size="7.5">0101</text><text x="7" y="16" text-anchor="middle" font-family="Liberation Sans" font-weight="bold" font-size="8">DAT</text></svg>
<div class="t" style="left:1330.5px;top:741.15px;font-size:14px;line-height:18px;">Defined Strings</div>
<svg class="a" style="left:1435px;top:745px;" width="8" height="8" viewBox="0 0 8 8"><path d="M1 1 L7 7 M7 1 L1 7" stroke="#111" stroke-width="1.7"/></svg>
<svg class="a" style="left:1472px;top:743px;" width="15" height="15" viewBox="0 0 15 15"><circle cx="3.5" cy="3.5" r="2.5" fill="none" stroke="#555" stroke-width="1.5"/><rect x="8" y="1" width="6" height="5" fill="#555"/><rect x="1" y="9" width="5" height="5" fill="none" stroke="#555" stroke-width="1.5"/><circle cx="11" cy="11" r="3" fill="#555"/><path d="M6 3.5 H8 M11 6 V8" stroke="#555"/></svg>
<div class="t" style="left:1492.7px;top:741.15px;font-size:14px;line-height:18px;">Modules</div>
<svg class="a" style="left:1552px;top:745px;" width="8" height="8" viewBox="0 0 8 8"><path d="M1 1 L7 7 M7 1 L1 7" stroke="#111" stroke-width="1.7"/></svg>
<svg class="a" style="left:1589px;top:744px;" width="15" height="12" viewBox="0 0 15 12"><rect x="0.5" y="0.5" width="14" height="11" fill="#fff" stroke="#555"/><path d="M0.5 4 H14 M5 4 V11 M5 7.5 H14" stroke="#555"/></svg>
<div class="t" style="left:1609px;top:741.15px;font-size:14px;line-height:18px;">Registers</div>
<svg class="a" style="left:1676px;top:745px;" width="8" height="8" viewBox="0 0 8 8"><path d="M1 1 L7 7 M7 1 L1 7" stroke="#111" stroke-width="1.7"/></svg>
<svg class="a" style="left:1712px;top:742px;" width="15" height="16" viewBox="0 0 15 16"><path d="M0.5 0.5 H11 L14.5 4 V15.5 H0.5 Z" fill="#fff" stroke="#000"/><text x="2" y="7.5" font-family="Liberation Sans" font-weight="bold" font-size="7.5">10</text><text x="2" y="14.5" font-family="Liberation Sans" font-weight="bold" font-size="7.5">01</text></svg>
<div class="t" style="left:1732.5px;top:741.15px;font-size:14px;line-height:18px;">Memory</div>
<svg class="a" style="left:1791px;top:745px;" width="8" height="8" viewBox="0 0 8 8"><path d="M1 1 L7 7 M7 1 L1 7" stroke="#111" stroke-width="1.7"/></svg>
<svg class="a" style="left:1827px;top:742px;" width="16" height="16" viewBox="0 0 16 16"><circle cx="8" cy="8" r="7" fill="#0f64b0"/><path d="M4.1499999999999995 4.1499999999999995 L11.15 11.15 L12.899999999999999 6.6 A4.8999999999999995 4.8999999999999995 0 0 0 6.6 3.1000000000000005 Z" fill="#fff"/></svg>
<div class="t" style="left:1848px;top:741.15px;font-size:14px;line-height:18px;">Brea</div>
<svg class="a" style="left:1883px;top:744px;" width="8" height="13" viewBox="0 0 8 13"><path d="M1 1 L6.5 6.5 L1 12" stroke="#444" stroke-width="1.3" fill="none"/></svg>
<svg class="a" style="left:1901px;top:745px;" width="13" height="8" viewBox="0 0 13 8"><path d="M1 7 L6.5 1.5 L12 7" stroke="#444" stroke-width="1.3" fill="none"/></svg>
<div class="a" style="left:1px;top:772px;width:665px;height:244px;background:#fff;border:1px solid #858585;border-right:2px solid #858585;border-bottom:2px solid #858585"></div>
<div class="a" style="left:2px;top:773px;width:663px;height:23px;background:linear-gradient(to right,#a9a9a9,#f2f2f2);border-top:1px solid #fff;border-left:1px solid #fff"></div>
<div class="a" style="left:2px;top:795px;width:663px;height:1px;background:#858585"></div>
<div class="a" style="left:1px;top:796px;width:665px;height:1px;background:#9a9a9a"></div>
<svg class="a" style="left:4px;top:777px;" width="16" height="13" viewBox="0 0 16 13"><path d="M0 1.5 H16" stroke="#2a9a2a" stroke-width="2"/><path d="M0 6 H16 M0 10.5 H16" stroke="#666" stroke-width="2"/></svg>
<div class="t" style="left:24.7px;top:774.15px;font-size:14px;line-height:18px;">Stack - 1</div>
<div class="t" style="left:97.5px;top:774.15px;font-size:14px;line-height:18px;letter-spacing:0.19px;">Thread 0x7ffff7f52b80 (LWP 112889) &quot;termmines&quot; 0x0000000000400ad0 in main ()</div>
<svg class="a" style="left:646.1px;top:778.5px;" width="11" height="11" viewBox="0 0 11 11"><path d="M1 1 L10 10 M10 1 L1 10" stroke="#000" stroke-width="2.2"/></svg>
<div class="a" style="left:2px;top:796px;width:663px;height:24px;background:#fff;border-bottom:1px solid #dadada"></div>
<div class="a" style="left:34px;top:796px;width:1px;height:24px;background:#dedede"></div>
<div class="a" style="left:244px;top:796px;width:1px;height:24px;background:#dedede"></div>
<div class="a" style="left:454px;top:796px;width:1px;height:24px;background:#dedede"></div>
<svg class="a" style="left:7px;top:801px;" width="16" height="14" viewBox="0 0 16 14"><path d="M1.5 1 V13 H14.5 L13 11 H11 L10 9 H8 L7 7 H5 L4 4.5 H2.5 Z" fill="#d4d4d4" stroke="#555" stroke-width="1"/><path d="M2 11 H12 M2 9 H9.5 M2 7 H6.5" stroke="#888" stroke-width="0.8"/></svg>
<div class="t" style="left:22px;top:799.15px;font-size:14px;line-height:18px;">.</div>
<div class="t" style="left:132.5px;top:799.15px;font-size:14px;line-height:18px;">PC</div>
<div class="t" style="left:322.7px;top:799.15px;font-size:14px;line-height:18px;">Function</div>
<div class="t" style="left:535.6px;top:799.15px;font-size:14px;line-height:18px;">Module</div>
<div class="a" style="left:2px;top:820px;width:663px;height:21px;background:#eef5fd"></div>
<div class="t" style="left:7.5px;top:822.15px;font-size:14px;line-height:18px;font-weight:bold;letter-spacing:0.6px;">[0]</div>
<div class="t" style="left:40.8px;top:822.15px;font-size:14px;line-height:18px;font-weight:bold;letter-spacing:0.6px;">00400ad0</div>
<div class="t" style="left:250.8px;top:822.15px;font-size:14px;line-height:18px;font-weight:bold;letter-spacing:0.6px;">main</div>
<div class="t" style="left:460px;top:822.15px;font-size:14px;line-height:18px;font-weight:bold;letter-spacing:0.6px;">termmines</div>
<div class="a" style="left:2px;top:985px;width:663px;height:1px;background:#b0b0b0"></div>
<div class="a" style="left:2px;top:986px;width:663px;height:29px;background:#f2f2f2"></div>
<div class="t" style="left:7px;top:990.15px;font-size:14px;line-height:18px;">Filter:</div>
<div class="a" style="left:53.4px;top:988px;width:544px;height:25px;background:#fff;border:1px solid #c2c2c2"></div>
<svg class="a" style="left:603.4px;top:991.5px;" width="18" height="18" viewBox="0 0 18 18"><path d="M3.5 1.5 H11.5 L15.5 5.5 V16.5 H3.5 Z" fill="#d8e8fa" stroke="#3a7ad8" stroke-width="1.1"/><path d="M11.5 1.5 V5.5 H15.5" fill="none" stroke="#3a7ad8" stroke-width="0.8"/><path d="M5 5.5 L1.5 8.5 L5 11.5 M8 5.5 L11.5 8.5 L8 11.5" fill="none" stroke="#3a7ad0" stroke-width="1.6"/><path d="M5 14 H14" stroke="#5a9ae0" stroke-width="1.2"/></svg>
<svg class="a" style="left:630.4px;top:992.5px;" width="16" height="16" viewBox="0 0 16 16"><path d="M1 3.5 H15 M1 8 H15 M1 12.5 H15" stroke="#8a8a8a" stroke-width="1.6"/><circle cx="5" cy="3.5" r="2.3" fill="#8a8a8a"/><path d="M9.5 5 L13 8 L9.5 11 Z" fill="#8a8a8a"/><circle cx="7" cy="12.5" r="2.3" fill="#8a8a8a"/></svg>
<svg class="a" style="left:653.4px;top:998.5px;" width="7" height="4" viewBox="0 0 7 4"><path d="M0 0 H7 L3.5 4 Z" fill="#000"/></svg>
<div class="a" style="left:1px;top:1016px;width:666px;height:1px;background:#b8b8b8"></div>
<div class="a" style="left:115px;top:1016px;width:100px;height:3px;background:#8fb8e0"></div>
<svg class="a" style="left:14px;top:1026px;" width="14" height="13" viewBox="0 0 14 13"><rect x="0.5" y="0.5" width="13" height="12" fill="#222"/><rect x="2" y="2" width="10" height="7" fill="#3cbf3c"/><path d="M4.5 2 V9 M7 2 V9 M9.5 2 V9" stroke="#222"/><path d="M2 10.5 V12.5 M5 10.5 V12.5 M8 10.5 V12.5 M11 10.5 V12.5" stroke="#ddd"/></svg>
<div class="t" style="left:33.8px;top:1024.15px;font-size:14px;line-height:18px;">Regions</div>
<svg class="a" style="left:91.3px;top:1028px;" width="8" height="8" viewBox="0 0 8 8"><path d="M1 1 L7 7 M7 1 L1 7" stroke="#111" stroke-width="1.7"/></svg>
<svg class="a" style="left:127px;top:1026px;" width="15" height="13" viewBox="0 0 15 13"><path d="M0 1.5 H15" stroke="#2a9a2a" stroke-width="2"/><path d="M0 6.5 H15 M0 11.5 H15" stroke="#666" stroke-width="2"/></svg>
<div class="t" style="left:148.3px;top:1024.15px;font-size:14px;line-height:18px;">Stack</div>
<svg class="a" style="left:191.4px;top:1028px;" width="8" height="8" viewBox="0 0 8 8"><path d="M1 1 L7 7 M7 1 L1 7" stroke="#111" stroke-width="1.7"/></svg>
<svg class="a" style="left:228px;top:1025px;" width="14" height="15" viewBox="0 0 14 15"><rect x="0.5" y="0.5" width="13" height="10" fill="#6a9ad8" stroke="#666"/><rect x="2" y="2" width="10" height="7" fill="#a8c8f0"/><path d="M4 13.5 H10" stroke="#888" stroke-width="2"/></svg>
<div class="t" style="left:248.4px;top:1024.15px;font-size:14px;line-height:18px;">Console</div>
<svg class="a" style="left:306.5px;top:1028px;" width="8" height="8" viewBox="0 0 8 8"><path d="M1 1 L7 7 M7 1 L1 7" stroke="#111" stroke-width="1.7"/></svg>
<svg class="a" style="left:343px;top:1024px;" width="12" height="16" viewBox="0 0 12 16"><path d="M1.5 1.5 L10 8 L1.5 14.5 L4 8 Z" fill="none" stroke="#333" stroke-width="1.8"/></svg>
<div class="t" style="left:363.6px;top:1024.15px;font-size:14px;line-height:18px;">Watches</div>
<svg class="a" style="left:425px;top:1028px;" width="8" height="8" viewBox="0 0 8 8"><path d="M1 1 L7 7 M7 1 L1 7" stroke="#111" stroke-width="1.7"/></svg>
<svg class="a" style="left:461px;top:1024px;" width="15" height="16" viewBox="0 0 15 16"><rect x="5.5" y="0.5" width="4" height="4" fill="#fff" stroke="#aaa"/><path d="M7.5 5 V8 M2 10 V8 H13 V10" stroke="#aaa" fill="none"/><rect x="0.5" y="10.5" width="4" height="5" fill="#fff" stroke="#bbb"/><rect x="5.5" y="10.5" width="4" height="5" fill="#f8d0c0" stroke="#bbb"/><rect x="10.5" y="10.5" width="4" height="5" fill="#d0f0d0" stroke="#bbb"/></svg>
<div class="t" style="left:482.6px;top:1024.15px;font-size:14px;line-height:18px;">Symbol Tree</div>
<svg class="a" style="left:569.3px;top:1028px;" width="8" height="8" viewBox="0 0 8 8"><path d="M1 1 L7 7 M7 1 L1 7" stroke="#111" stroke-width="1.7"/></svg>
<div class="a" style="left:668px;top:772px;width:1250px;height:244px;background:#f2f2f2;border:1px solid #858585"></div>
<div class="a" style="left:669px;top:773px;width:1248px;height:22px;background:linear-gradient(to right,#3a7bcf 0%,#8ab4e0 45%,#f2f2f2 100%)"></div>
<div class="a" style="left:668px;top:795px;width:1250px;height:1px;background:#808080"></div>
<div class="t" style="left:676px;top:774.65px;font-size:14px;line-height:18px;color:#fff;">Terminal - local-gdb.sh /tmp/termmines</div>
<svg class="a" style="left:1830px;top:776px;" width="16" height="16" viewBox="0 0 16 16"><rect x="1" y="1" width="8" height="9" fill="#a8a8a8"/><rect x="6" y="6" width="9" height="9" fill="#a8a8a8" stroke="#f2f2f2" stroke-width="0.8"/></svg>
<svg class="a" style="left:1853px;top:776px;" width="16" height="17" viewBox="0 0 16 17"><rect x="1" y="1" width="10" height="12" rx="2" fill="#a8a8a8"/><rect x="5" y="4" width="10" height="12" rx="2" fill="#a0a0a0" stroke="#f2f2f2" stroke-width="0.8"/></svg>
<div class="a" style="left:1873px;top:776px;width:1px;height:16px;background:#c4c4c4"></div>
<svg class="a" style="left:1880.0px;top:781px;" width="10" height="6" viewBox="0 0 10 6"><path d="M0 0 H10 L5.0 6 Z" fill="#000"/></svg>
<svg class="a" style="left:1900.5px;top:778.5px;" width="11" height="11" viewBox="0 0 11 11"><path d="M1 1 L10 10 M10 1 L1 10" stroke="#000" stroke-width="2.2"/></svg>
<div class="a" style="left:669px;top:796px;width:1238px;height:219px;background:#000;border:1px solid #6a6a6a"></div>
<div class="a" style="left:1907px;top:796px;width:10px;height:219px;background:#f4f4f4"></div>
<div class="a" style="left:1909px;top:960px;width:5px;height:50px;background:#d0d0d0;border-radius:3px"></div>
<div class="a" style="left:670px;top:797px;width:1236px;height:217px;overflow:hidden">
<div class="a" style="left:-670px;top:-797px;width:1920px;height:1080px">
<div class="t" style="left:672.7px;top:791.09px;font-size:11.67px;line-height:15px;color:#d0d0d0;font-weight:bold;font-family:'Liberation Mono',monospace;">Reading symbols from </div>
<div class="t" style="left:819.7px;top:791.09px;font-size:11.67px;line-height:15px;color:#3ed83e;font-weight:bold;font-family:'Liberation Mono',monospace;">/tmp/termmines</div>
<div class="t" style="left:917.7px;top:791.09px;font-size:11.67px;line-height:15px;color:#d0d0d0;font-weight:bold;font-family:'Liberation Mono',monospace;">...</div>
<div class="t" style="left:672.7px;top:807.09px;font-size:11.67px;line-height:15px;color:#d0d0d0;font-weight:bold;font-family:'Liberation Mono',monospace;">(No debugging symbols found in </div>
<div class="t" style="left:889.7px;top:807.09px;font-size:11.67px;line-height:15px;color:#3ed83e;font-weight:bold;font-family:'Liberation Mono',monospace;">/tmp/termmines</div>
<div class="t" style="left:987.7px;top:807.09px;font-size:11.67px;line-height:15px;color:#d0d0d0;font-weight:bold;font-family:'Liberation Mono',monospace;">)</div>
<div class="t" style="left:672.7px;top:823.09px;font-size:11.67px;line-height:15px;color:#d0d0d0;font-weight:bold;font-family:'Liberation Mono',monospace;">Connected to Ghidra 12.0.2 at 127.0.0.1:40985</div>
<div class="t" style="left:672.7px;top:839.09px;font-size:11.67px;line-height:15px;color:#d0d0d0;font-weight:bold;font-family:'Liberation Mono',monospace;">Temporary breakpoint 1 at </div>
<div class="t" style="left:854.7px;top:839.09px;font-size:11.67px;line-height:15px;color:#5a50ff;font-weight:bold;font-family:'Liberation Mono',monospace;">0x400ad0</div>
<div class="t" style="left:672.7px;top:855.09px;font-size:11.67px;line-height:15px;color:#d0d0d0;font-weight:bold;font-family:'Liberation Mono',monospace;">Starting program: </div>
<div class="t" style="left:798.7px;top:855.09px;font-size:11.67px;line-height:15px;color:#3ed83e;font-weight:bold;font-family:'Liberation Mono',monospace;">/tmp/termmines</div>
<div class="t" style="left:672.7px;top:871.09px;font-size:11.67px;line-height:15px;color:#d0d0d0;font-weight:bold;font-family:'Liberation Mono',monospace;">[Thread debugging using libthread_db enabled]</div>
<div class="t" style="left:672.7px;top:887.09px;font-size:11.67px;line-height:15px;color:#d0d0d0;font-weight:bold;font-family:'Liberation Mono',monospace;">Using host libthread_db library &quot;</div>
<div class="t" style="left:903.7px;top:887.09px;font-size:11.67px;line-height:15px;color:#3ed83e;font-weight:bold;font-family:'Liberation Mono',monospace;">/lib64/libthread_db.so.1</div>
<div class="t" style="left:1071.7px;top:887.09px;font-size:11.67px;line-height:15px;color:#d0d0d0;font-weight:bold;font-family:'Liberation Mono',monospace;">&quot;.</div>
<div class="t" style="left:672.7px;top:919.09px;font-size:11.67px;line-height:15px;color:#d0d0d0;font-weight:bold;font-family:'Liberation Mono',monospace;">Temporary breakpoint 1, </div>
<div class="t" style="left:840.7px;top:919.09px;font-size:11.67px;line-height:15px;color:#5a50ff;font-weight:bold;font-family:'Liberation Mono',monospace;">0x0000000000400ad0</div>
<div class="t" style="left:966.7px;top:919.09px;font-size:11.67px;line-height:15px;color:#d0d0d0;font-weight:bold;font-family:'Liberation Mono',monospace;"> in </div>
<div class="t" style="left:994.7px;top:919.09px;font-size:11.67px;line-height:15px;color:#e0d040;font-weight:bold;font-family:'Liberation Mono',monospace;">main</div>
<div class="t" style="left:1022.7px;top:919.09px;font-size:11.67px;line-height:15px;color:#d0d0d0;font-weight:bold;font-family:'Liberation Mono',monospace;"> ()</div>
<div class="t" style="left:672.7px;top:935.09px;font-size:11.67px;line-height:15px;color:#d0d0d0;font-weight:bold;font-family:'Liberation Mono',monospace;">Missing rpms, try: dnf --enablerepo=&#x27;*debug*&#x27; install ncurses-libs-debuginfo-6.2-12.20210508.el9.x86_64 glibc</div>
<div class="t" style="left:672.7px;top:951.09px;font-size:11.67px;line-height:15px;color:#d0d0d0;font-weight:bold;font-family:'Liberation Mono',monospace;">-debuginfo-2.34-231.el9_7.2.x86_64</div>
<div class="t" style="left:672.7px;top:967.09px;font-size:11.67px;line-height:15px;color:#d0d0d0;font-weight:bold;font-family:'Liberation Mono',monospace;">(gdb) Breakpoint 2 at </div>
<div class="t" style="left:826.7px;top:967.09px;font-size:11.67px;line-height:15px;color:#5a50ff;font-weight:bold;font-family:'Liberation Mono',monospace;">0x7ffff7c43f60</div>
<div class="t" style="left:672.7px;top:983.09px;font-size:11.67px;line-height:15px;color:#d0d0d0;font-weight:bold;font-family:'Liberation Mono',monospace;">Breakpoint 3 at </div>
<div class="t" style="left:784.7px;top:983.09px;font-size:11.67px;line-height:15px;color:#5a50ff;font-weight:bold;font-family:'Liberation Mono',monospace;">0x7ffff7c43ef0</div>
<div class="t" style="left:672.7px;top:999.09px;font-size:11.67px;line-height:15px;color:#d0d0d0;font-weight:bold;font-family:'Liberation Mono',monospace;">(gdb) </div>
<div class="a" style="left:714px;top:998px;width:7px;height:16px;border:1px solid #e01010"></div>
</div></div>
<div class="a" style="left:667px;top:1016px;width:1252px;height:1px;background:#b8b8b8"></div>
<div class="a" style="left:1045px;top:1016px;width:103px;height:3px;background:#2b6ec1"></div>
<svg class="a" style="left:681px;top:1024px;" width="16" height="16" viewBox="0 0 16 16"><circle cx="8" cy="8" r="7" fill="#fff" stroke="#c8a060" stroke-width="1.4"/><circle cx="8" cy="8" r="5" fill="#e8f0ff" stroke="#6a8ac0"/><path d="M8 4.5 V8 L10.5 9.5" stroke="#333" fill="none"/></svg>
<div class="t" style="left:701.7px;top:1024.15px;font-size:14px;line-height:18px;">Time</div>
<svg class="a" style="left:740.3px;top:1028px;" width="8" height="8" viewBox="0 0 8 8"><path d="M1 1 L7 7 M7 1 L1 7" stroke="#111" stroke-width="1.7"/></svg>
<svg class="a" style="left:778px;top:1024px;" width="13" height="16" viewBox="0 0 13 16"><path d="M0.5 0.5 H9 L12.5 4 V15.5 H0.5 Z" fill="#fff" stroke="#c8a060"/><path d="M3 5 H10 M3 8 H10 M3 11 H10" stroke="#8aa"/></svg>
<div class="t" style="left:797.3px;top:1024.15px;font-size:14px;line-height:18px;">Static Mappings</div>
<svg class="a" style="left:906px;top:1028px;" width="8" height="8" viewBox="0 0 8 8"><path d="M1 1 L7 7 M7 1 L1 7" stroke="#111" stroke-width="1.7"/></svg>
<svg class="a" style="left:943px;top:1024px;" width="16" height="16" viewBox="0 0 16 16"><ellipse cx="8" cy="9" rx="4.5" ry="5.5" fill="#3d63c9" transform="rotate(35 8 9)"/><path d="M2 4 L5 6 M1 10 H4 M3 15 L6 12 M14 2 L11 5 M15 9 H12 M13 15 L10 12" stroke="#3d63c9" stroke-width="1.5"/><circle cx="13" cy="2" r="2" fill="#6c6"/></svg>
<div class="t" style="left:962.7px;top:1024.15px;font-size:14px;line-height:18px;">Threads</div>
<svg class="a" style="left:1021.7px;top:1028px;" width="8" height="8" viewBox="0 0 8 8"><path d="M1 1 L7 7 M7 1 L1 7" stroke="#111" stroke-width="1.7"/></svg>
<div class="t" style="left:1061.7px;top:1024.15px;font-size:14px;line-height:18px;">Terminal</div>
<svg class="a" style="left:1124.3px;top:1028px;" width="8" height="8" viewBox="0 0 8 8"><path d="M1 1 L7 7 M7 1 L1 7" stroke="#111" stroke-width="1.7"/></svg>
<div class="a" style="left:1px;top:1049px;width:1918px;height:28px;background:#f2f2f2"></div>
<svg class="a" style="left:3px;top:1055px;" width="19" height="19" viewBox="0 0 19 19"><circle cx="9.5" cy="9.5" r="8.5" fill="#f4e8e0" stroke="#999"/><path d="M4 14 C5 8 9 4 15 5 C12 7 12 9 14 12 C11 11 8 12 6 15 Z" fill="#d02010"/></svg>
<div class="a" style="left:24px;top:1053px;width:1409px;height:24px;background:#f2f2f2;border-top:2px solid #8c8c8c;border-left:2px solid #8c8c8c;border-right:1px solid #fff"></div>
<div class="a" style="left:1437px;top:1053px;width:102px;height:24px;background:#f2f2f2;border-top:2px solid #8c8c8c;border-left:2px solid #8c8c8c;border-right:1px solid #fff"></div>
<div class="t" style="left:1441.7px;top:1055.15px;font-size:14px;line-height:18px;">00143f60</div>
<div class="a" style="left:1543px;top:1053px;width:137px;height:24px;background:#f2f2f2;border-top:2px solid #8c8c8c;border-left:2px solid #8c8c8c;border-right:1px solid #fff"></div>
<div class="t" style="left:1551.7px;top:1055.15px;font-size:14px;line-height:18px;">srandom</div>
<div class="a" style="left:1684px;top:1053px;width:208px;height:24px;background:#f2f2f2;border-top:2px solid #8c8c8c;border-left:2px solid #8c8c8c;border-right:1px solid #fff"></div>
<div class="t" style="left:1692.3px;top:1055.15px;font-size:14px;line-height:18px;">ENDBR64</div>
<div class="a" style="left:1896px;top:1053px;width:23px;height:24px;background:#f2f2f2;border-top:2px solid #8c8c8c;border-left:2px solid #8c8c8c;border-right:1px solid #fff"></div>
</body></html>
